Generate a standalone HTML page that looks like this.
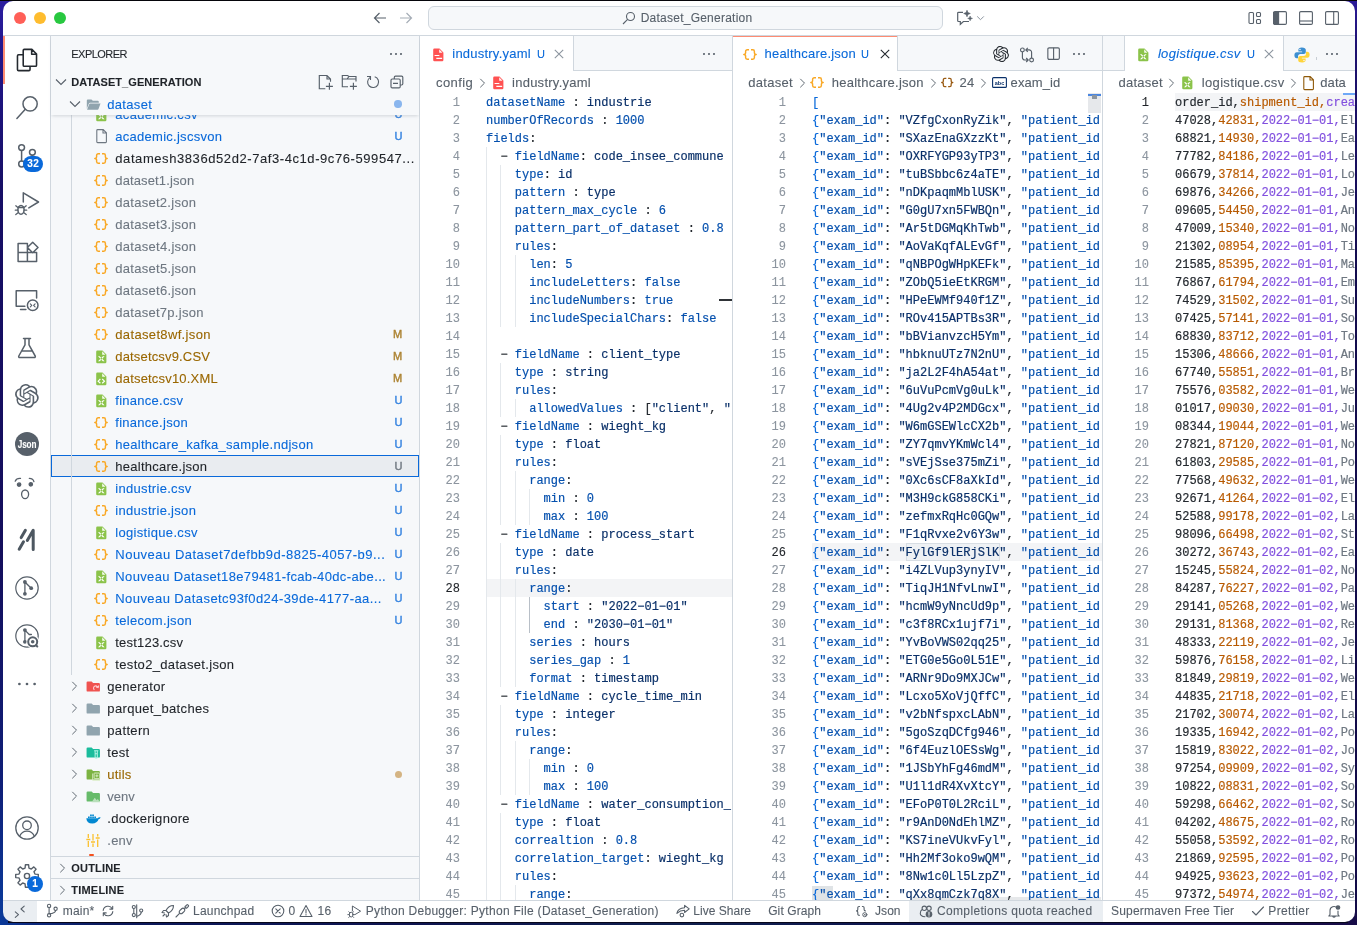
<!DOCTYPE html><html><head><meta charset="utf-8"><title>Dataset_Generation</title><style>
*{box-sizing:border-box;margin:0;padding:0}
html,body{width:1357px;height:925px;overflow:hidden}
body{position:relative;font-family:"Liberation Sans",sans-serif;font-size:13px;color:#1f2328;-webkit-text-stroke:0.1px;
 background:#120e52}
.abs{position:absolute}
#win{position:absolute;left:0;top:0;width:1357px;height:925px;background:#fff;
 clip-path:inset(1px 2px 3px 3px round 10px);will-change:transform}
#topedge{position:absolute;left:0;top:0;width:1357px;height:1px;background:#05050a}
.hl{position:absolute;background:#d0d7de}
.mono{font-family:"Liberation Mono",monospace;font-size:12px;line-height:18px;white-space:pre;-webkit-text-stroke:0.18px}
.ln{position:absolute;text-align:right;color:#8c959f;font-family:"Liberation Mono",monospace;font-size:12px;line-height:18px;white-space:pre}
.ln b{font-weight:normal;color:#1f2328}
.code{position:absolute;overflow:hidden;z-index:2}
.code div{height:18px}
.k{color:#0550ae}.s{color:#0a3069}.p{color:#24292f}.b{color:#0969da}
.o{color:#b85a00}.v{color:#8250df}.g{color:#6e7781}
.row{position:absolute;left:52px;width:367px;height:22px;line-height:22px;font-size:13px;white-space:nowrap}
.row .lbl{position:absolute;top:0}
.row .bd{position:absolute;left:340px;width:12px;text-align:center;font-size:11px;top:0}
.row svg{position:absolute}
.cu{color:#0969da}.cm{color:#9a6700}.cg{color:#6e7781}.cn{color:#1f2328}
.sb{position:absolute;top:901px;height:21px;line-height:21px;font-size:12px;color:#57606a;white-space:nowrap}
.tab{position:absolute;top:36px;height:35px;line-height:35px;font-size:13px;white-space:nowrap}
.bc{position:absolute;top:71px;height:22px;line-height:22px;font-size:13px;color:#57606a;white-space:nowrap}
.guide{position:absolute;width:1px;background:#e4e8ec}
svg{overflow:visible}
</style></head><body>
<div class="abs" style="left:0;top:0;width:14px;height:925px;background:linear-gradient(180deg,#2c1ea0 0%,#21168a 6%,#170f66 20%,#140e5c 60%,#0f1f78 85%,#0b3796 97%,#0a3a9a 100%)"></div>
<div class="abs" style="left:1343px;top:0;width:14px;height:925px;background:linear-gradient(180deg,#2c1b9a 0%,#1d1170 5%,#130c4e 30%,#120b48 100%)"></div>
<div class="abs" style="left:0;top:910px;width:1357px;height:15px;background:linear-gradient(90deg,#0a3a9a 0%,#0c2a80 2%,#0d1a5c 8%,#0e1450 30%,#10204e 50%,#0e1450 70%,#180c48 100%)"></div>
<div class="abs" style="left:8px;top:921px;width:1340px;height:2px;background:#07071c"></div>
<div id="win">
<div class="abs" style="left:0;top:0;width:1357px;height:35px;background:#fff"></div>
<div class="hl" style="left:0;top:35px;width:1357px;height:1px"></div>
<div class="abs" style="left:14px;top:12px;width:12px;height:12px;border-radius:50%;background:#ff5f57"></div>
<div class="abs" style="left:34px;top:12px;width:12px;height:12px;border-radius:50%;background:#febc2e"></div>
<div class="abs" style="left:54px;top:12px;width:12px;height:12px;border-radius:50%;background:#28c840"></div>
<svg class="abs" style="left:373px;top:11px" width="14" height="14" viewBox="0 0 14 14" fill="none" stroke="#57606a" stroke-width="1.2"><path d="M13 7H1.5M6.5 2L1.5 7l5 5"/></svg>
<svg class="abs" style="left:399px;top:11px" width="14" height="14" viewBox="0 0 14 14" fill="none" stroke="#a5adb6" stroke-width="1.2"><path d="M1 7h11.5M7.5 2l5 5-5 5"/></svg>
<div class="abs" style="left:428px;top:6px;width:515px;height:24px;border:1px solid #d0d7de;border-radius:6px;background:#f6f8fa"></div>
<svg class="abs" style="left:622px;top:11px" width="14" height="14" viewBox="0 0 14 14" fill="none" stroke="#57606a" stroke-width="1.1"><circle cx="8.5" cy="5.5" r="4"/><path d="M5.6 8.4L1 13"/></svg>
<div class="abs" style="left:640.7px;top:10px;font-size:12px;line-height:16px;color:#57606a;letter-spacing:0.24px">Dataset_Generation</div>
<svg class="abs" style="left:956px;top:10px" width="30" height="16" viewBox="0 0 30 16" fill="none" stroke="#57606a" stroke-width="1.200"><path d="M7 2.300H2.500a.8.800 0 0 0-.8.800V10.700a.8.800 0 0 0 .8.800H4.300V14.300L7.400 11.500H13"/><path d="M11 0.200l.9 2.400 2.400.9-2.400.9-.9 2.400-.9-2.400-2.400-.9 2.400-.9z" fill="#57606a" stroke="#57606a" stroke-width=".6" stroke-linejoin="round"/><path d="M14.100 6l.65 1.750 1.750.65-1.750.65-.65 1.750-.65-1.750-1.750-.65 1.750-.65z" fill="#57606a" stroke="#57606a" stroke-width=".5" stroke-linejoin="round"/><path d="M21.200 6.400l3.300 3.300 3.300-3.300" stroke="#8c959f" stroke-width="1"/></svg>
<svg class="abs" style="left:1247.7px;top:11px" width="14" height="14" viewBox="0 0 14 14" fill="none" stroke="#57606a" stroke-width="1.1"><rect x="1" y="1.5" width="4.5" height="11" rx="1"/><rect x="8.5" y="1.5" width="4" height="4" rx="1"/><rect x="8.5" y="8.5" width="4" height="4" rx="1"/></svg>
<svg class="abs" style="left:1273px;top:11px" width="14" height="14" viewBox="0 0 14 14" fill="none" stroke="#57606a" stroke-width="1.1"><rect x="0.6" y="0.6" width="12.8" height="12.8" rx="1.2"/><path d="M0.6 1.5h5v11h-5z" fill="#57606a"/></svg>
<svg class="abs" style="left:1299px;top:11px" width="14" height="14" viewBox="0 0 14 14" fill="none" stroke="#57606a" stroke-width="1.1"><rect x="0.6" y="0.6" width="12.8" height="12.8" rx="1.2"/><path d="M0.6 10h12.8"/></svg>
<svg class="abs" style="left:1325px;top:11px" width="14" height="14" viewBox="0 0 14 14" fill="none" stroke="#57606a" stroke-width="1.1"><rect x="0.6" y="0.6" width="12.8" height="12.8" rx="1.2"/><path d="M8.7 0.6v12.8"/></svg>
<div class="abs" style="left:0;top:36px;width:50px;height:864px;background:#fff"></div>
<div class="hl" style="left:50px;top:36px;width:1px;height:864px"></div>
<div class="abs" style="left:3px;top:36px;width:2px;height:48px;background:#fd8c73"></div>
<svg class="abs" style="left:14.0px;top:46.8px" width="26" height="26" viewBox="0 0 24 24" ><g fill="none" stroke="#24292f" stroke-width="1.450" stroke-linejoin="round"><path d="M9.500 2.200h7l4.300 4.300v10.300a1 1 0 0 1-1 1H9.500a1 1 0 0 1-1-1V3.200a1 1 0 0 1 1-1zM16.300 2.400v4.300h4.300"/><path d="M8.500 7.200H4.200a1 1 0 0 0-1 1v12.600a1 1 0 0 0 1 1h9.600a1 1 0 0 0 1-1v-3"/></g></svg>
<svg class="abs" style="left:15.0px;top:95.0px" width="24" height="24" viewBox="0 0 24 24" ><g fill="none" stroke="#57606a" stroke-width="1.500" stroke-linejoin="round" stroke-linecap="round"><circle cx="15.100" cy="8.900" r="7.100"/><path d="M10.300 14.200L1.900 23.500"/></g></svg>
<svg class="abs" style="left:15.0px;top:143.0px" width="24" height="24" viewBox="0 0 24 24" ><g fill="none" stroke="#57606a" stroke-width="1.500" stroke-linejoin="round" stroke-linecap="round"><circle cx="6.600" cy="4.600" r="2.900"/><circle cx="6.600" cy="21" r="2.900"/><circle cx="17.400" cy="9.300" r="2.900"/><path d="M6.600 7.500v10.600M17.400 12.200c0 3.500-5 4.500-8.500 6.300"/></g></svg>
<div class="abs" style="left:23px;top:156px;width:20px;height:16px;border-radius:8px;background:#0969da;color:#fff;font-size:10px;font-weight:bold;line-height:16px;text-align:center;letter-spacing:.4px;text-indent:.4px">32</div>
<svg class="abs" style="left:15.0px;top:191.0px" width="24" height="24" viewBox="0 0 24 24" ><g fill="none" stroke="#57606a" stroke-width="1.500" stroke-linejoin="round" stroke-linecap="round"><path d="M8.300 11V1.800L23.500 11 13.800 16.900"/><ellipse cx="6" cy="18.800" rx="3.100" ry="4.400"/><path d="M3.300 16.500h5.400M3.200 16.800L0.800 14.800M8.800 16.800l2.400-2M2.900 19.200H0.300M9.100 19.200h2.600M3.400 21.500L0.800 23.500M8.600 21.500l2.600 2" stroke-width="1.300"/></g></svg>
<svg class="abs" style="left:15.0px;top:239.0px" width="24" height="24" viewBox="0 0 24 24" ><g fill="none" stroke="#57606a" stroke-width="1.500" stroke-linejoin="round" stroke-linecap="round"><path d="M3.100 4.400H12.400V22.600M3.100 4.400V22.600H21.600V13.500H3.100M17.700 3.200L23 8.500 17.700 13.800 12.400 8.500z"/></g></svg>
<svg class="abs" style="left:15.0px;top:287.0px" width="24" height="24" viewBox="0 0 24 24" ><g fill="none" stroke="#57606a" stroke-width="1.500" stroke-linejoin="round" stroke-linecap="round"><path d="M9.900 19.300H1.200V3.700H21.600V11M5.500 22.500H10.900"/><circle cx="17.700" cy="18.300" r="5.300"/><path d="M15.300 16.800l1.500 1.500-1.500 1.500M20.100 16.800l-1.500 1.500 1.500 1.500" stroke-width="1.100"/></g></svg>
<svg class="abs" style="left:15.0px;top:335.8px" width="24" height="24" viewBox="0 0 24 24" ><g fill="none" stroke="#57606a" stroke-width="1.500" stroke-linejoin="round" stroke-linecap="round"><path d="M8.500 2.500h7M10 2.500v6.300L3.800 20a1 1 0 0 0 .9 1.500h14.600a1 1 0 0 0 .9-1.500L14 8.800V2.500M6.500 15h11"/></g></svg>
<svg class="abs" style="left:14.8px;top:383.7px" width="23.8" height="23.8" viewBox="0 0 24 24" ><path fill="#57606a" d="M22.2819 9.8211a5.9847 5.9847 0 0 0-.5157-4.9108 6.0462 6.0462 0 0 0-6.5098-2.9A6.0651 6.0651 0 0 0 4.9807 4.1818a5.9847 5.9847 0 0 0-3.9977 2.9 6.0462 6.0462 0 0 0 .7427 7.0966 5.98 5.98 0 0 0 .511 4.9107 6.051 6.051 0 0 0 6.5146 2.9001A5.9847 5.9847 0 0 0 13.2599 24a6.0557 6.0557 0 0 0 5.7718-4.2058 5.9894 5.9894 0 0 0 3.9977-2.9001 6.0557 6.0557 0 0 0-.7475-7.0729zm-9.022 12.6081a4.4755 4.4755 0 0 1-2.8764-1.0408l.1419-.0804 4.7783-2.7582a.7948.7948 0 0 0 .3927-.6813v-6.7369l2.02 1.1686a.071.071 0 0 1 .038.052v5.5826a4.504 4.504 0 0 1-4.4945 4.4944zm-9.6607-4.1254a4.4708 4.4708 0 0 1-.5346-3.0137l.142.0852 4.783 2.7582a.7712.7712 0 0 0 .7806 0l5.8428-3.3685v2.3324a.0804.0804 0 0 1-.0332.0615L9.74 19.9502a4.4992 4.4992 0 0 1-6.1408-1.6464zM2.3408 7.8956a4.485 4.485 0 0 1 2.3655-1.9728V11.6a.7664.7664 0 0 0 .3879.6765l5.8144 3.3543-2.0201 1.1685a.0757.0757 0 0 1-.071 0l-4.8303-2.7865A4.504 4.504 0 0 1 2.3408 7.8956zm16.5963 3.8558L13.1038 8.364 15.1192 7.2a.0757.0757 0 0 1 .071 0l4.8303 2.7913a4.4944 4.4944 0 0 1-.6765 8.1042v-5.6772a.79.79 0 0 0-.407-.667zm2.0107-3.0231l-.142-.0852-4.7735-2.7818a.7759.7759 0 0 0-.7854 0L9.409 9.2297V6.8974a.0662.0662 0 0 1 .0284-.0615l4.8303-2.7866a4.4992 4.4992 0 0 1 6.6802 4.66zM8.3065 12.863l-2.02-1.1638a.0804.0804 0 0 1-.038-.0567V6.0742a4.4992 4.4992 0 0 1 7.3757-3.4537l-.142.0805L8.704 5.459a.7948.7948 0 0 0-.3927.6813zm1.0976-2.3654l2.602-1.4998 2.6069 1.4998v2.9994l-2.5974 1.4997-2.6067-1.4997Z"/></svg>
<div class="abs" style="left:15.100px;top:431.800px;width:24px;height:24px;border-radius:50%;background:#57606a;color:#fff;font-size:10.500px;font-weight:bold;line-height:24px;text-align:center;letter-spacing:-0.100px"><span style="display:inline-block;transform:scaleX(.78)">Json</span></div>
<svg class="abs" style="left:13.0px;top:477.0px" width="24" height="24" viewBox="0 0 24 24" ><g fill="none" stroke="#57606a" stroke-width="1.300" stroke-linecap="round"><path d="M2.200 4.200C3 2.300 5.300 1.200 7.500 1.400M16.300 1.300C18.500 1.300 20.500 2.700 20.900 4.700"/><circle cx="6.100" cy="7.600" r="1.700" fill="#57606a"/><circle cx="17.800" cy="7.300" r="1.700" fill="#57606a"/><ellipse cx="12.100" cy="17.300" rx="3.500" ry="4.300"/></g></svg>
<svg class="abs" style="left:15.0px;top:527.0px" width="24" height="24" viewBox="0 0 24 24" ><g fill="none" stroke="#4d5761" stroke-width="3" stroke-linecap="round" stroke-linejoin="round"><path d="M10.400 3.300L6.200 10.600M8.500 14.800L4.200 22.300M18.200 22.600V3.200L12.300 13.500"/></g></svg>
<svg class="abs" style="left:15.0px;top:575.9px" width="24" height="24" viewBox="0 0 24 24" ><g fill="none" stroke="#57606a" stroke-width="1.500" stroke-linejoin="round" stroke-linecap="round"><circle cx="12" cy="12" r="11.200" stroke-width="1.200"/><path d="M9.900 6v11.800M9.900 6l6.300 6.200" stroke-width="1.300"/><circle cx="9.900" cy="6" r="1.900" fill="#57606a" stroke="none"/><circle cx="9.900" cy="17.800" r="1.900" fill="#57606a" stroke="none"/><circle cx="16.200" cy="12.200" r="1.900" fill="#57606a" stroke="none"/></g></svg>
<svg class="abs" style="left:15.0px;top:623.8px" width="24" height="24" viewBox="0 0 24 24" ><g fill="none" stroke="#57606a" stroke-width="1.500" stroke-linejoin="round" stroke-linecap="round"><circle cx="12" cy="12" r="11.200" stroke-width="1.200"/><path d="M9.900 6.100v11.700M9.900 6.100l4.300 4.400h2.200" stroke-width="1.300"/><circle cx="9.900" cy="6.100" r="1.900" fill="#57606a" stroke="none"/><circle cx="9.900" cy="17.800" r="1.900" fill="#57606a" stroke="none"/><circle cx="17.900" cy="17.900" r="6.400" fill="#fff" stroke="none"/><circle cx="17.700" cy="17.800" r="4.500" stroke-width="2"/><circle cx="17.700" cy="17.800" r="1.800" fill="#57606a" stroke="none"/><path d="M21 21.200l1.300 1.300" stroke-width="2"/></g></svg>
<svg class="abs" style="left:17.0px;top:682.0px" width="20" height="4" viewBox="0 0 20 4" ><circle cx="2.400" cy="2" r="1.350" fill="#57606a"/><circle cx="10" cy="2" r="1.350" fill="#57606a"/><circle cx="17.600" cy="2" r="1.350" fill="#57606a"/></svg>
<svg class="abs" style="left:15.0px;top:816.0px" width="24" height="24" viewBox="0 0 24 24" ><g fill="none" stroke="#57606a" stroke-width="1.500" stroke-linejoin="round" stroke-linecap="round"><circle cx="12" cy="12" r="11.200" stroke-width="1.300"/><circle cx="12" cy="9.300" r="4.300" stroke-width="1.300"/><path d="M4.600 20.300c1.300-3.300 4-5.200 7.400-5.200s6.100 1.900 7.400 5.200" stroke-width="1.300"/></g></svg>
<svg class="abs" style="left:15.0px;top:864.0px" width="24" height="24" viewBox="0 0 24 24" ><g fill="none" stroke="#57606a" stroke-width="1.500" stroke-linejoin="round" stroke-linecap="round"><path d="M19.97 10.09 L23.29 10.39 L23.29 13.61 L19.97 13.91 L18.99 16.28 L21.12 18.84 L18.84 21.12 L16.28 18.99 L13.91 19.97 L13.61 23.29 L10.39 23.29 L10.09 19.97 L7.72 18.99 L5.16 21.12 L2.88 18.84 L5.01 16.28 L4.03 13.91 L0.71 13.61 L0.71 10.39 L4.03 10.09 L5.01 7.72 L2.88 5.16 L5.16 2.88 L7.72 5.01 L10.09 4.03 L10.39 0.71 L13.61 0.71 L13.91 4.03 L16.28 5.01 L18.84 2.88 L21.12 5.16 L18.99 7.72 Z" stroke-width="1.400"/><circle cx="12" cy="12" r="2.600" stroke-width="1.400"/></g></svg>
<div class="abs" style="left:27px;top:876px;width:16px;height:16px;border-radius:8px;background:#0969da;color:#fff;font-size:10px;font-weight:bold;line-height:16px;text-align:center">1</div>
<div class="abs" style="left:51px;top:36px;width:368px;height:864px;background:#f6f8fa"></div>
<div class="hl" style="left:419px;top:36px;width:1px;height:864px"></div>
<div class="abs" style="left:51px;top:455px;width:368px;height:22px;background:#e9ecf0;border:1px solid #0969da"></div>
<div class="abs" style="left:71px;top:115px;width:1px;height:560px;background:#d0d7de"></div>
<svg class="abs" style="left:95.7px;top:107.5px" width="10.6" height="13.8" viewBox="0 0 16 20" ><path d="M2.2 0.3h7.6l5.9 5.9v11.6a1.9 1.9 0 0 1-1.9 1.9H2.2a1.9 1.9 0 0 1-1.9-1.9V2.2A1.9 1.9 0 0 1 2.2 0.3z" fill="#8bc34a"/><path d="M9.3 1.6v5h5z" fill="#fff" opacity=".92"/><path d="M3 9.2l2.6 0 2.4 2.4 2.4-2.4 2.6 0-3.7 3.7 3.7 3.7-2.6 0-2.4-2.4-2.4 2.4-2.6 0 3.7-3.7z" fill="#fff"/><rect x="6.9" y="11.7" width="2.2" height="2.2" fill="#8bc34a"/></svg>
<div class="abs" style="left:115.3px;top:105.0px;height:20px;line-height:20px;font-size:13px;color:#0969da;white-space:nowrap;letter-spacing:0.312px;">academic.csv</div>
<div class="abs" style="left:390.500px;top:104px;width:16px;text-align:center;height:20px;line-height:20px;font-size:11px;-webkit-text-stroke:.45px;opacity:.8;color:#0969da">U</div>
<svg class="abs" style="left:95.5px;top:129.0px" width="11" height="14" viewBox="0 0 11 14" ><path d="M1.6 0.6h5.6l3.2 3.2v9a.8.8 0 0 1-.8.8h-8a.8.8 0 0 1-.8-.8V1.4a.8.8 0 0 1 .8-.8zM7 0.8v3.2h3.2" fill="none" stroke="#6e7781" stroke-width="1.1"/></svg>
<div class="abs" style="left:115.3px;top:127.0px;height:20px;line-height:20px;font-size:13px;color:#0969da;white-space:nowrap;letter-spacing:0.269px;">academic.jscsvon</div>
<div class="abs" style="left:390.500px;top:126px;width:16px;text-align:center;height:20px;line-height:20px;font-size:11px;-webkit-text-stroke:.45px;opacity:.8;color:#0969da">U</div>
<svg class="abs" style="left:94.0px;top:152.5px" width="14" height="11" viewBox="0 0 14 11" ><path d="M6 0.800H4.200a1.600 1.600 0 0 0-1.600 1.600V4c0 .9-.7 1.500-1.800 1.500 1.100 0 1.800.6 1.800 1.500v1.600a1.600 1.600 0 0 0 1.600 1.600H6M8 0.800h1.800a1.600 1.600 0 0 1 1.600 1.600V4c0 .9.7 1.500 1.800 1.500-1.100 0-1.800.6-1.800 1.500v1.600a1.600 1.600 0 0 1-1.600 1.600H8" fill="none" stroke="#f9a825" stroke-width="1.450" stroke-linejoin="round"/></svg>
<div class="abs" style="left:115.3px;top:149.0px;height:20px;line-height:20px;font-size:13px;color:#1f2328;white-space:nowrap;letter-spacing:0.576px;">datamesh3836d52d2-7af3-4c1d-9c76-599547...</div>
<svg class="abs" style="left:94.0px;top:174.5px" width="14" height="11" viewBox="0 0 14 11" ><path d="M6 0.800H4.200a1.600 1.600 0 0 0-1.600 1.600V4c0 .9-.7 1.500-1.800 1.500 1.100 0 1.800.6 1.800 1.500v1.600a1.600 1.600 0 0 0 1.600 1.600H6M8 0.800h1.800a1.600 1.600 0 0 1 1.600 1.600V4c0 .9.7 1.500 1.800 1.500-1.100 0-1.800.6-1.800 1.500v1.600a1.600 1.600 0 0 1-1.600 1.600H8" fill="none" stroke="#f9a825" stroke-width="1.450" stroke-linejoin="round"/></svg>
<div class="abs" style="left:115.3px;top:171.0px;height:20px;line-height:20px;font-size:13px;color:#6e7781;white-space:nowrap;letter-spacing:0.128px;">dataset1.json</div>
<svg class="abs" style="left:94.0px;top:196.5px" width="14" height="11" viewBox="0 0 14 11" ><path d="M6 0.800H4.200a1.600 1.600 0 0 0-1.600 1.600V4c0 .9-.7 1.500-1.800 1.500 1.100 0 1.800.6 1.800 1.500v1.600a1.600 1.600 0 0 0 1.600 1.600H6M8 0.800h1.800a1.600 1.600 0 0 1 1.600 1.600V4c0 .9.7 1.500 1.800 1.500-1.100 0-1.800.6-1.800 1.500v1.600a1.600 1.600 0 0 1-1.600 1.600H8" fill="none" stroke="#f9a825" stroke-width="1.450" stroke-linejoin="round"/></svg>
<div class="abs" style="left:115.3px;top:193.0px;height:20px;line-height:20px;font-size:13px;color:#6e7781;white-space:nowrap;letter-spacing:0.274px;">dataset2.json</div>
<svg class="abs" style="left:94.0px;top:218.5px" width="14" height="11" viewBox="0 0 14 11" ><path d="M6 0.800H4.200a1.600 1.600 0 0 0-1.600 1.600V4c0 .9-.7 1.500-1.800 1.500 1.100 0 1.800.6 1.800 1.500v1.600a1.600 1.600 0 0 0 1.600 1.600H6M8 0.800h1.800a1.600 1.600 0 0 1 1.600 1.600V4c0 .9.7 1.500 1.800 1.500-1.100 0-1.800.6-1.800 1.500v1.600a1.600 1.600 0 0 1-1.600 1.600H8" fill="none" stroke="#f9a825" stroke-width="1.450" stroke-linejoin="round"/></svg>
<div class="abs" style="left:115.3px;top:215.0px;height:20px;line-height:20px;font-size:13px;color:#6e7781;white-space:nowrap;letter-spacing:0.289px;">dataset3.json</div>
<svg class="abs" style="left:94.0px;top:240.5px" width="14" height="11" viewBox="0 0 14 11" ><path d="M6 0.800H4.200a1.600 1.600 0 0 0-1.600 1.600V4c0 .9-.7 1.500-1.800 1.500 1.100 0 1.800.6 1.800 1.500v1.600a1.600 1.600 0 0 0 1.600 1.600H6M8 0.800h1.800a1.600 1.600 0 0 1 1.600 1.600V4c0 .9.7 1.500 1.800 1.500-1.100 0-1.800.6-1.800 1.500v1.600a1.600 1.600 0 0 1-1.600 1.600H8" fill="none" stroke="#f9a825" stroke-width="1.450" stroke-linejoin="round"/></svg>
<div class="abs" style="left:115.3px;top:237.0px;height:20px;line-height:20px;font-size:13px;color:#6e7781;white-space:nowrap;letter-spacing:0.289px;">dataset4.json</div>
<svg class="abs" style="left:94.0px;top:262.5px" width="14" height="11" viewBox="0 0 14 11" ><path d="M6 0.800H4.200a1.600 1.600 0 0 0-1.600 1.600V4c0 .9-.7 1.500-1.800 1.500 1.100 0 1.800.6 1.800 1.500v1.600a1.600 1.600 0 0 0 1.600 1.600H6M8 0.800h1.800a1.600 1.600 0 0 1 1.600 1.600V4c0 .9.7 1.500 1.800 1.500-1.100 0-1.800.6-1.800 1.500v1.600a1.600 1.600 0 0 1-1.600 1.600H8" fill="none" stroke="#f9a825" stroke-width="1.450" stroke-linejoin="round"/></svg>
<div class="abs" style="left:115.3px;top:259.0px;height:20px;line-height:20px;font-size:13px;color:#6e7781;white-space:nowrap;letter-spacing:0.289px;">dataset5.json</div>
<svg class="abs" style="left:94.0px;top:284.5px" width="14" height="11" viewBox="0 0 14 11" ><path d="M6 0.800H4.200a1.600 1.600 0 0 0-1.600 1.600V4c0 .9-.7 1.500-1.800 1.500 1.100 0 1.800.6 1.800 1.500v1.600a1.600 1.600 0 0 0 1.600 1.600H6M8 0.800h1.800a1.600 1.600 0 0 1 1.600 1.600V4c0 .9.7 1.500 1.800 1.500-1.100 0-1.800.6-1.800 1.500v1.600a1.600 1.600 0 0 1-1.600 1.600H8" fill="none" stroke="#f9a825" stroke-width="1.450" stroke-linejoin="round"/></svg>
<div class="abs" style="left:115.3px;top:281.0px;height:20px;line-height:20px;font-size:13px;color:#6e7781;white-space:nowrap;letter-spacing:0.289px;">dataset6.json</div>
<svg class="abs" style="left:94.0px;top:306.5px" width="14" height="11" viewBox="0 0 14 11" ><path d="M6 0.800H4.200a1.600 1.600 0 0 0-1.600 1.600V4c0 .9-.7 1.500-1.800 1.500 1.100 0 1.800.6 1.800 1.500v1.600a1.600 1.600 0 0 0 1.600 1.600H6M8 0.800h1.800a1.600 1.600 0 0 1 1.600 1.600V4c0 .9.7 1.500 1.800 1.500-1.100 0-1.800.6-1.800 1.500v1.600a1.600 1.600 0 0 1-1.600 1.600H8" fill="none" stroke="#f9a825" stroke-width="1.450" stroke-linejoin="round"/></svg>
<div class="abs" style="left:115.3px;top:303.0px;height:20px;line-height:20px;font-size:13px;color:#6e7781;white-space:nowrap;letter-spacing:0.274px;">dataset7p.json</div>
<svg class="abs" style="left:94.0px;top:328.5px" width="14" height="11" viewBox="0 0 14 11" ><path d="M6 0.800H4.200a1.600 1.600 0 0 0-1.600 1.600V4c0 .9-.7 1.500-1.800 1.500 1.100 0 1.800.6 1.800 1.500v1.600a1.600 1.600 0 0 0 1.600 1.600H6M8 0.800h1.800a1.600 1.600 0 0 1 1.600 1.600V4c0 .9.7 1.500 1.800 1.500-1.100 0-1.800.6-1.800 1.500v1.600a1.600 1.600 0 0 1-1.600 1.600H8" fill="none" stroke="#f9a825" stroke-width="1.450" stroke-linejoin="round"/></svg>
<div class="abs" style="left:115.3px;top:325.0px;height:20px;line-height:20px;font-size:13px;color:#9a6700;white-space:nowrap;letter-spacing:0.344px;">dataset8wf.json</div>
<div class="abs" style="left:389.700px;top:324px;width:16px;text-align:center;height:20px;line-height:20px;font-size:11px;-webkit-text-stroke:.45px;opacity:.8;color:#9a6700">M</div>
<svg class="abs" style="left:95.7px;top:349.5px" width="10.6" height="13.8" viewBox="0 0 16 20" ><path d="M2.2 0.3h7.6l5.9 5.9v11.6a1.9 1.9 0 0 1-1.9 1.9H2.2a1.9 1.9 0 0 1-1.9-1.9V2.2A1.9 1.9 0 0 1 2.2 0.3z" fill="#8bc34a"/><path d="M9.3 1.6v5h5z" fill="#fff" opacity=".92"/><path d="M3 9.2l2.6 0 2.4 2.4 2.4-2.4 2.6 0-3.7 3.7 3.7 3.7-2.6 0-2.4-2.4-2.4 2.4-2.6 0 3.7-3.7z" fill="#fff"/><rect x="6.9" y="11.7" width="2.2" height="2.2" fill="#8bc34a"/></svg>
<div class="abs" style="left:115.3px;top:347.0px;height:20px;line-height:20px;font-size:13px;color:#9a6700;white-space:nowrap;letter-spacing:0.165px;">datsetcsv9.CSV</div>
<div class="abs" style="left:389.700px;top:346px;width:16px;text-align:center;height:20px;line-height:20px;font-size:11px;-webkit-text-stroke:.45px;opacity:.8;color:#9a6700">M</div>
<svg class="abs" style="left:95.7px;top:371.5px" width="10.6" height="13.8" viewBox="0 0 16 20" ><path d="M2.2 0.3h7.6l5.9 5.9v11.6a1.9 1.9 0 0 1-1.9 1.9H2.2a1.9 1.9 0 0 1-1.9-1.9V2.2A1.9 1.9 0 0 1 2.2 0.3z" fill="#8bc34a"/><path d="M9.3 1.6v5h5z" fill="#fff" opacity=".92"/><path d="M6.6 10.2L3.2 13.4l3.4 3.2M9.4 10.2l3.4 3.2-3.4 3.2" fill="none" stroke="#fff" stroke-width="1.7"/></svg>
<div class="abs" style="left:115.3px;top:369.0px;height:20px;line-height:20px;font-size:13px;color:#9a6700;white-space:nowrap;letter-spacing:0.192px;">datsetcsv10.XML</div>
<div class="abs" style="left:389.700px;top:368px;width:16px;text-align:center;height:20px;line-height:20px;font-size:11px;-webkit-text-stroke:.45px;opacity:.8;color:#9a6700">M</div>
<svg class="abs" style="left:95.7px;top:393.5px" width="10.6" height="13.8" viewBox="0 0 16 20" ><path d="M2.2 0.3h7.6l5.9 5.9v11.6a1.9 1.9 0 0 1-1.9 1.9H2.2a1.9 1.9 0 0 1-1.9-1.9V2.2A1.9 1.9 0 0 1 2.2 0.3z" fill="#8bc34a"/><path d="M9.3 1.6v5h5z" fill="#fff" opacity=".92"/><path d="M3 9.2l2.6 0 2.4 2.4 2.4-2.4 2.6 0-3.7 3.7 3.7 3.7-2.6 0-2.4-2.4-2.4 2.4-2.6 0 3.7-3.7z" fill="#fff"/><rect x="6.9" y="11.7" width="2.2" height="2.2" fill="#8bc34a"/></svg>
<div class="abs" style="left:115.3px;top:391.0px;height:20px;line-height:20px;font-size:13px;color:#0969da;white-space:nowrap;letter-spacing:0.26px;">finance.csv</div>
<div class="abs" style="left:390.500px;top:390px;width:16px;text-align:center;height:20px;line-height:20px;font-size:11px;-webkit-text-stroke:.45px;opacity:.8;color:#0969da">U</div>
<svg class="abs" style="left:94.0px;top:416.5px" width="14" height="11" viewBox="0 0 14 11" ><path d="M6 0.800H4.200a1.600 1.600 0 0 0-1.600 1.600V4c0 .9-.7 1.500-1.800 1.500 1.100 0 1.800.6 1.800 1.500v1.600a1.600 1.600 0 0 0 1.600 1.600H6M8 0.800h1.800a1.600 1.600 0 0 1 1.600 1.600V4c0 .9.7 1.500 1.800 1.500-1.100 0-1.800.6-1.800 1.500v1.600a1.600 1.600 0 0 1-1.600 1.600H8" fill="none" stroke="#f9a825" stroke-width="1.450" stroke-linejoin="round"/></svg>
<div class="abs" style="left:115.3px;top:413.0px;height:20px;line-height:20px;font-size:13px;color:#0969da;white-space:nowrap;letter-spacing:0.268px;">finance.json</div>
<div class="abs" style="left:390.500px;top:412px;width:16px;text-align:center;height:20px;line-height:20px;font-size:11px;-webkit-text-stroke:.45px;opacity:.8;color:#0969da">U</div>
<svg class="abs" style="left:94.0px;top:438.5px" width="14" height="11" viewBox="0 0 14 11" ><path d="M6 0.800H4.200a1.600 1.600 0 0 0-1.600 1.600V4c0 .9-.7 1.500-1.800 1.500 1.100 0 1.800.6 1.800 1.500v1.600a1.600 1.600 0 0 0 1.600 1.600H6M8 0.800h1.800a1.600 1.600 0 0 1 1.600 1.600V4c0 .9.7 1.500 1.800 1.500-1.100 0-1.800.6-1.800 1.500v1.600a1.600 1.600 0 0 1-1.600 1.600H8" fill="none" stroke="#f9a825" stroke-width="1.450" stroke-linejoin="round"/></svg>
<div class="abs" style="left:115.3px;top:435.0px;height:20px;line-height:20px;font-size:13px;color:#0969da;white-space:nowrap;letter-spacing:0.267px;">healthcare_kafka_sample.ndjson</div>
<div class="abs" style="left:390.500px;top:434px;width:16px;text-align:center;height:20px;line-height:20px;font-size:11px;-webkit-text-stroke:.45px;opacity:.8;color:#0969da">U</div>
<svg class="abs" style="left:94.0px;top:460.5px" width="14" height="11" viewBox="0 0 14 11" ><path d="M6 0.800H4.200a1.600 1.600 0 0 0-1.600 1.600V4c0 .9-.7 1.500-1.800 1.500 1.100 0 1.800.6 1.800 1.500v1.600a1.600 1.600 0 0 0 1.600 1.600H6M8 0.800h1.800a1.600 1.600 0 0 1 1.600 1.600V4c0 .9.7 1.500 1.800 1.500-1.100 0-1.800.6-1.800 1.500v1.600a1.600 1.600 0 0 1-1.600 1.600H8" fill="none" stroke="#f9a825" stroke-width="1.450" stroke-linejoin="round"/></svg>
<div class="abs" style="left:115.3px;top:457.0px;height:20px;line-height:20px;font-size:13px;color:#1f2328;white-space:nowrap;letter-spacing:0.255px;">healthcare.json</div>
<div class="abs" style="left:390.500px;top:456px;width:16px;text-align:center;height:20px;line-height:20px;font-size:11px;-webkit-text-stroke:.45px;opacity:.8;color:#57606a">U</div>
<svg class="abs" style="left:95.7px;top:481.5px" width="10.6" height="13.8" viewBox="0 0 16 20" ><path d="M2.2 0.3h7.6l5.9 5.9v11.6a1.9 1.9 0 0 1-1.9 1.9H2.2a1.9 1.9 0 0 1-1.9-1.9V2.2A1.9 1.9 0 0 1 2.2 0.3z" fill="#8bc34a"/><path d="M9.3 1.6v5h5z" fill="#fff" opacity=".92"/><path d="M3 9.2l2.6 0 2.4 2.4 2.4-2.4 2.6 0-3.7 3.7 3.7 3.7-2.6 0-2.4-2.4-2.4 2.4-2.6 0 3.7-3.7z" fill="#fff"/><rect x="6.9" y="11.7" width="2.2" height="2.2" fill="#8bc34a"/></svg>
<div class="abs" style="left:115.3px;top:479.0px;height:20px;line-height:20px;font-size:13px;color:#0969da;white-space:nowrap;letter-spacing:0.304px;">industrie.csv</div>
<div class="abs" style="left:390.500px;top:478px;width:16px;text-align:center;height:20px;line-height:20px;font-size:11px;-webkit-text-stroke:.45px;opacity:.8;color:#0969da">U</div>
<svg class="abs" style="left:94.0px;top:504.5px" width="14" height="11" viewBox="0 0 14 11" ><path d="M6 0.800H4.200a1.600 1.600 0 0 0-1.600 1.600V4c0 .9-.7 1.500-1.800 1.500 1.100 0 1.800.6 1.800 1.500v1.600a1.600 1.600 0 0 0 1.600 1.600H6M8 0.800h1.800a1.600 1.600 0 0 1 1.600 1.600V4c0 .9.7 1.500 1.800 1.500-1.100 0-1.800.6-1.800 1.500v1.600a1.600 1.600 0 0 1-1.600 1.600H8" fill="none" stroke="#f9a825" stroke-width="1.450" stroke-linejoin="round"/></svg>
<div class="abs" style="left:115.3px;top:501.0px;height:20px;line-height:20px;font-size:13px;color:#0969da;white-space:nowrap;letter-spacing:0.307px;">industrie.json</div>
<div class="abs" style="left:390.500px;top:500px;width:16px;text-align:center;height:20px;line-height:20px;font-size:11px;-webkit-text-stroke:.45px;opacity:.8;color:#0969da">U</div>
<svg class="abs" style="left:95.7px;top:525.5px" width="10.6" height="13.8" viewBox="0 0 16 20" ><path d="M2.2 0.3h7.6l5.9 5.9v11.6a1.9 1.9 0 0 1-1.9 1.9H2.2a1.9 1.9 0 0 1-1.9-1.9V2.2A1.9 1.9 0 0 1 2.2 0.3z" fill="#8bc34a"/><path d="M9.3 1.6v5h5z" fill="#fff" opacity=".92"/><path d="M3 9.2l2.6 0 2.4 2.4 2.4-2.4 2.6 0-3.7 3.7 3.7 3.7-2.6 0-2.4-2.4-2.4 2.4-2.6 0 3.7-3.7z" fill="#fff"/><rect x="6.9" y="11.7" width="2.2" height="2.2" fill="#8bc34a"/></svg>
<div class="abs" style="left:115.3px;top:523.0px;height:20px;line-height:20px;font-size:13px;color:#0969da;white-space:nowrap;letter-spacing:0.318px;">logistique.csv</div>
<div class="abs" style="left:390.500px;top:522px;width:16px;text-align:center;height:20px;line-height:20px;font-size:11px;-webkit-text-stroke:.45px;opacity:.8;color:#0969da">U</div>
<svg class="abs" style="left:94.0px;top:548.5px" width="14" height="11" viewBox="0 0 14 11" ><path d="M6 0.800H4.200a1.600 1.600 0 0 0-1.600 1.600V4c0 .9-.7 1.500-1.800 1.500 1.100 0 1.800.6 1.800 1.500v1.600a1.600 1.600 0 0 0 1.600 1.600H6M8 0.800h1.800a1.600 1.600 0 0 1 1.600 1.600V4c0 .9.7 1.500 1.800 1.500-1.100 0-1.800.6-1.800 1.500v1.600a1.600 1.600 0 0 1-1.600 1.600H8" fill="none" stroke="#f9a825" stroke-width="1.450" stroke-linejoin="round"/></svg>
<div class="abs" style="left:115.3px;top:545.0px;height:20px;line-height:20px;font-size:13px;color:#0969da;white-space:nowrap;letter-spacing:0.492px;">Nouveau Dataset7defbb9d-8825-4057-b9...</div>
<div class="abs" style="left:390.500px;top:544px;width:16px;text-align:center;height:20px;line-height:20px;font-size:11px;-webkit-text-stroke:.45px;opacity:.8;color:#0969da">U</div>
<svg class="abs" style="left:95.7px;top:569.5px" width="10.6" height="13.8" viewBox="0 0 16 20" ><path d="M2.2 0.3h7.6l5.9 5.9v11.6a1.9 1.9 0 0 1-1.9 1.9H2.2a1.9 1.9 0 0 1-1.9-1.9V2.2A1.9 1.9 0 0 1 2.2 0.3z" fill="#8bc34a"/><path d="M9.3 1.6v5h5z" fill="#fff" opacity=".92"/><path d="M3 9.2l2.6 0 2.4 2.4 2.4-2.4 2.6 0-3.7 3.7 3.7 3.7-2.6 0-2.4-2.4-2.4 2.4-2.6 0 3.7-3.7z" fill="#fff"/><rect x="6.9" y="11.7" width="2.2" height="2.2" fill="#8bc34a"/></svg>
<div class="abs" style="left:115.3px;top:567.0px;height:20px;line-height:20px;font-size:13px;color:#0969da;white-space:nowrap;letter-spacing:0.355px;">Nouveau Dataset18e79481-fcab-40dc-abe...</div>
<div class="abs" style="left:390.500px;top:566px;width:16px;text-align:center;height:20px;line-height:20px;font-size:11px;-webkit-text-stroke:.45px;opacity:.8;color:#0969da">U</div>
<svg class="abs" style="left:94.0px;top:592.5px" width="14" height="11" viewBox="0 0 14 11" ><path d="M6 0.800H4.200a1.600 1.600 0 0 0-1.600 1.600V4c0 .9-.7 1.500-1.800 1.500 1.100 0 1.800.6 1.800 1.500v1.600a1.600 1.600 0 0 0 1.600 1.600H6M8 0.800h1.800a1.600 1.600 0 0 1 1.600 1.600V4c0 .9.7 1.500 1.800 1.500-1.100 0-1.800.6-1.800 1.500v1.600a1.600 1.600 0 0 1-1.600 1.600H8" fill="none" stroke="#f9a825" stroke-width="1.450" stroke-linejoin="round"/></svg>
<div class="abs" style="left:115.3px;top:589.0px;height:20px;line-height:20px;font-size:13px;color:#0969da;white-space:nowrap;letter-spacing:0.421px;">Nouveau Datasetc93f0d24-39de-4177-aa...</div>
<div class="abs" style="left:390.500px;top:588px;width:16px;text-align:center;height:20px;line-height:20px;font-size:11px;-webkit-text-stroke:.45px;opacity:.8;color:#0969da">U</div>
<svg class="abs" style="left:94.0px;top:614.5px" width="14" height="11" viewBox="0 0 14 11" ><path d="M6 0.800H4.200a1.600 1.600 0 0 0-1.600 1.600V4c0 .9-.7 1.500-1.800 1.500 1.100 0 1.800.6 1.800 1.500v1.600a1.600 1.600 0 0 0 1.600 1.600H6M8 0.800h1.800a1.600 1.600 0 0 1 1.600 1.600V4c0 .9.7 1.500 1.800 1.500-1.100 0-1.800.6-1.800 1.500v1.600a1.600 1.600 0 0 1-1.600 1.600H8" fill="none" stroke="#f9a825" stroke-width="1.450" stroke-linejoin="round"/></svg>
<div class="abs" style="left:115.3px;top:611.0px;height:20px;line-height:20px;font-size:13px;color:#0969da;white-space:nowrap;letter-spacing:0.31px;">telecom.json</div>
<div class="abs" style="left:390.500px;top:610px;width:16px;text-align:center;height:20px;line-height:20px;font-size:11px;-webkit-text-stroke:.45px;opacity:.8;color:#0969da">U</div>
<svg class="abs" style="left:95.7px;top:635.5px" width="10.6" height="13.8" viewBox="0 0 16 20" ><path d="M2.2 0.3h7.6l5.9 5.9v11.6a1.9 1.9 0 0 1-1.9 1.9H2.2a1.9 1.9 0 0 1-1.9-1.9V2.2A1.9 1.9 0 0 1 2.2 0.3z" fill="#8bc34a"/><path d="M9.3 1.6v5h5z" fill="#fff" opacity=".92"/><path d="M3 9.2l2.6 0 2.4 2.4 2.4-2.4 2.6 0-3.7 3.7 3.7 3.7-2.6 0-2.4-2.4-2.4 2.4-2.6 0 3.7-3.7z" fill="#fff"/><rect x="6.9" y="11.7" width="2.2" height="2.2" fill="#8bc34a"/></svg>
<div class="abs" style="left:115.3px;top:633.0px;height:20px;line-height:20px;font-size:13px;color:#1f2328;white-space:nowrap;letter-spacing:0.195px;">test123.csv</div>
<svg class="abs" style="left:94.0px;top:658.5px" width="14" height="11" viewBox="0 0 14 11" ><path d="M6 0.800H4.200a1.600 1.600 0 0 0-1.600 1.600V4c0 .9-.7 1.500-1.800 1.500 1.100 0 1.800.6 1.800 1.500v1.600a1.600 1.600 0 0 0 1.600 1.600H6M8 0.800h1.800a1.600 1.600 0 0 1 1.600 1.600V4c0 .9.7 1.500 1.800 1.500-1.100 0-1.800.6-1.800 1.500v1.600a1.600 1.600 0 0 1-1.600 1.600H8" fill="none" stroke="#f9a825" stroke-width="1.450" stroke-linejoin="round"/></svg>
<div class="abs" style="left:115.3px;top:655.0px;height:20px;line-height:20px;font-size:13px;color:#1f2328;white-space:nowrap;letter-spacing:0.334px;">testo2_dataset.json</div>
<svg class="abs" style="left:71.0px;top:680.9px" width="6.8" height="10.2" viewBox="0 0 8 12" ><path d="M1.5 1l5 5-5 5" fill="none" stroke="#57606a" stroke-width="1.1"/></svg>
<svg class="abs" style="left:85.8px;top:680.5px" width="14.5" height="11" viewBox="0 0 16 13" ><path d="M1.5 0.5h4.6l1.7 1.8h6.7a1.4 1.4 0 0 1 1.4 1.4v7.4a1.4 1.4 0 0 1-1.4 1.4H1.5A1.4 1.4 0 0 1 .1 11.100V1.9A1.4 1.4 0 0 1 1.5.5z" fill="#ef5350"/><path d="M9.300 10.500a2.700 2.700 0 1 1 4.300-2.900M14.500 5.300l-.7 2.500-2.400-.8" fill="none" stroke="#ffcdd2" stroke-width="1.300"/></svg>
<div class="abs" style="left:107.3px;top:677.0px;height:20px;line-height:20px;font-size:13px;color:#1f2328;white-space:nowrap;letter-spacing:0.261px;">generator</div>
<svg class="abs" style="left:71.0px;top:702.9px" width="6.8" height="10.2" viewBox="0 0 8 12" ><path d="M1.5 1l5 5-5 5" fill="none" stroke="#57606a" stroke-width="1.1"/></svg>
<svg class="abs" style="left:85.8px;top:702.5px" width="14.5" height="11" viewBox="0 0 16 13" ><path d="M1.5 0.5h4.6l1.7 1.8h6.7a1.4 1.4 0 0 1 1.4 1.4v7.4a1.4 1.4 0 0 1-1.4 1.4H1.5A1.4 1.4 0 0 1 .1 11.100V1.9A1.4 1.4 0 0 1 1.5.5z" fill="#90a4ae"/></svg>
<div class="abs" style="left:107.3px;top:699.0px;height:20px;line-height:20px;font-size:13px;color:#1f2328;white-space:nowrap;letter-spacing:0.349px;">parquet_batches</div>
<svg class="abs" style="left:71.0px;top:724.9px" width="6.8" height="10.2" viewBox="0 0 8 12" ><path d="M1.5 1l5 5-5 5" fill="none" stroke="#57606a" stroke-width="1.1"/></svg>
<svg class="abs" style="left:85.8px;top:724.5px" width="14.5" height="11" viewBox="0 0 16 13" ><path d="M1.5 0.5h4.6l1.7 1.8h6.7a1.4 1.4 0 0 1 1.4 1.4v7.4a1.4 1.4 0 0 1-1.4 1.4H1.5A1.4 1.4 0 0 1 .1 11.100V1.9A1.4 1.4 0 0 1 1.5.5z" fill="#90a4ae"/></svg>
<div class="abs" style="left:107.3px;top:721.0px;height:20px;line-height:20px;font-size:13px;color:#1f2328;white-space:nowrap;letter-spacing:0.346px;">pattern</div>
<svg class="abs" style="left:71.0px;top:746.9px" width="6.8" height="10.2" viewBox="0 0 8 12" ><path d="M1.5 1l5 5-5 5" fill="none" stroke="#57606a" stroke-width="1.1"/></svg>
<svg class="abs" style="left:85.8px;top:746.5px" width="14.5" height="11" viewBox="0 0 16 13" ><path d="M1.5 0.5h4.6l1.7 1.8h6.7a1.4 1.4 0 0 1 1.4 1.4v7.4a1.4 1.4 0 0 1-1.4 1.4H1.5A1.4 1.4 0 0 1 .1 11.100V1.9A1.4 1.4 0 0 1 1.5.5z" fill="#1abc9c"/><path d="M9 4.300h5M10.200 4.300v7.700a1.300 1.300 0 0 0 2.600 0V4.300M10.200 8h2.600" fill="none" stroke="#b2f5e6" stroke-width="1.200"/></svg>
<div class="abs" style="left:107.3px;top:743.0px;height:20px;line-height:20px;font-size:13px;color:#1f2328;white-space:nowrap;letter-spacing:0.311px;">test</div>
<svg class="abs" style="left:71.0px;top:768.9px" width="6.8" height="10.2" viewBox="0 0 8 12" ><path d="M1.5 1l5 5-5 5" fill="none" stroke="#57606a" stroke-width="1.1"/></svg>
<svg class="abs" style="left:85.8px;top:768.5px" width="14.5" height="11" viewBox="0 0 16 13" ><path d="M1.5 0.5h4.6l1.7 1.8h6.7a1.4 1.4 0 0 1 1.4 1.4v7.4a1.4 1.4 0 0 1-1.4 1.4H1.5A1.4 1.4 0 0 1 .1 11.100V1.9A1.4 1.4 0 0 1 1.5.5z" fill="#7cb342"/><path d="M7.300 5.300v8.200h8.700" fill="none" stroke="#dcedc8" stroke-width="1"/><rect x="9" y="4.800" width="6.600" height="6.600" rx=".6" fill="none" stroke="#dcedc8" stroke-width="1.100"/><path d="M12.300 6.300v3.600M10.500 8.100h3.600" stroke="#dcedc8" stroke-width="1.100"/></svg>
<div class="abs" style="left:107.3px;top:765.0px;height:20px;line-height:20px;font-size:13px;color:#9a6700;white-space:nowrap;letter-spacing:0.236px;">utils</div>
<svg class="abs" style="left:71.0px;top:790.9px" width="6.8" height="10.2" viewBox="0 0 8 12" ><path d="M1.5 1l5 5-5 5" fill="none" stroke="#57606a" stroke-width="1.1"/></svg>
<svg class="abs" style="left:85.8px;top:790.5px" width="14.5" height="11" viewBox="0 0 16 13" ><path d="M1.5 0.5h4.6l1.7 1.8h6.7a1.4 1.4 0 0 1 1.4 1.4v7.4a1.4 1.4 0 0 1-1.4 1.4H1.5A1.4 1.4 0 0 1 .1 11.100V1.9A1.4 1.4 0 0 1 1.5.5z" fill="#66bb6a"/><path d="M6 13.300l3.800-5.300 2.300 3 1.300-1.600 2.600 3.900z" fill="#b9dfbb"/></svg>
<div class="abs" style="left:107.3px;top:787.0px;height:20px;line-height:20px;font-size:13px;color:#6e7781;white-space:nowrap;letter-spacing:-0.015px;">venv</div>
<div class="abs" style="left:394.500px;top:770.500px;width:7px;height:7px;border-radius:50%;background:#d4b483"></div>
<svg class="abs" style="left:85.5px;top:812.5px" width="15" height="11" viewBox="0 0 15 11" ><path d="M0.300 5.300h11.400c.6-.9 1.600-1.200 2.900-.9-.3.900-.9 1.500-1.900 1.700C11.700 9 9.600 10.600 6.300 10.600 2.600 10.600.500 8.700.3 5.300z" fill="#0288d1"/><path d="M2 3.400h1.700v1.500H2zM4.100 3.400h1.700v1.500H4.100zM6.200 3.400h1.700v1.500H6.200zM4.100 1.500h1.700V3H4.100zM6.200 1.500h1.700V3H6.200zM8.300 3.400H10v1.500H8.300z" fill="#0288d1"/></svg>
<div class="abs" style="left:107.3px;top:809.0px;height:20px;line-height:20px;font-size:13px;color:#1f2328;white-space:nowrap;letter-spacing:0.287px;">.dockerignore</div>
<svg class="abs" style="left:86.0px;top:833.5px" width="14" height="13" viewBox="0 0 14 13" ><g stroke="#fbc02d" stroke-width="1.300" fill="none"><path d="M2.300 0v4M2.300 7v6M7 0v6.500M7 9.500V13M11.700 0v2.500M11.700 5.500V13M0.300 5.500h4M5 8h4M9.700 4h4"/></g></svg>
<div class="abs" style="left:107.3px;top:831.0px;height:20px;line-height:20px;font-size:13px;color:#6e7781;white-space:nowrap;letter-spacing:0.232px;">.env</div>
<div class="abs" style="left:89px;top:854px;width:5px;height:2px;border-radius:1px;background:#f4511e"></div>
<div class="abs" style="left:51px;top:856px;width:368px;height:44px;background:#f6f8fa"></div>
<div class="hl" style="left:51px;top:856px;width:368px;height:1px"></div>
<div class="hl" style="left:51px;top:878px;width:368px;height:1px"></div>
<svg class="abs" style="left:58.6px;top:862.9px" width="6.8" height="10.2" viewBox="0 0 8 12" ><path d="M1.5 1l5 5-5 5" fill="none" stroke="#57606a" stroke-width="1.1"/></svg>
<div class="abs" style="left:71.3px;top:858.0px;height:20px;line-height:20px;font-size:11px;color:#1f2328;white-space:nowrap;letter-spacing:0.189px;font-weight:bold;">OUTLINE</div>
<svg class="abs" style="left:58.6px;top:884.9px" width="6.8" height="10.2" viewBox="0 0 8 12" ><path d="M1.5 1l5 5-5 5" fill="none" stroke="#57606a" stroke-width="1.1"/></svg>
<div class="abs" style="left:71.3px;top:880.0px;height:20px;line-height:20px;font-size:11px;color:#1f2328;white-space:nowrap;letter-spacing:0.208px;font-weight:bold;">TIMELINE</div>
<div class="abs" style="left:51px;top:36px;width:368px;height:79px;background:#f6f8fa;box-shadow:0 2px 3px -1px rgba(140,149,159,.35)"></div>
<div class="abs" style="left:71.3px;top:44.0px;height:20px;line-height:20px;font-size:11px;color:#1f2328;white-space:nowrap;letter-spacing:-0.526px;">EXPLORER</div>
<svg class="abs" style="left:389.0px;top:52.0px" width="14" height="4" viewBox="0 0 14 4" ><circle cx="2" cy="2" r="1.05" fill="#57606a"/><circle cx="7" cy="2" r="1.05" fill="#57606a"/><circle cx="12" cy="2" r="1.05" fill="#57606a"/></svg>
<svg class="abs" style="left:55.0px;top:78.0px" width="12" height="8" viewBox="0 0 12 8" ><path d="M1 1.5l5 5 5-5" fill="none" stroke="#57606a" stroke-width="1.1"/></svg>
<div class="abs" style="left:71.3px;top:72.0px;height:20px;line-height:20px;font-size:11px;color:#1f2328;white-space:nowrap;letter-spacing:0.069px;font-weight:bold;">DATASET_GENERATION</div>
<svg class="abs" style="left:317.0px;top:74.0px" width="16" height="16" viewBox="0 0 16 16" ><g fill="none" stroke="#57606a" stroke-width="1.150"><path d="M8.300 14.700H2.300V1.500H10L13.500 5V7.800M10 1.500V5H13.500M12.400 8.800V15.800M8.900 12.300H15.900"/></g></svg>
<svg class="abs" style="left:341.0px;top:74.0px" width="16" height="16" viewBox="0 0 16 16" ><g fill="none" stroke="#57606a" stroke-width="1.150"><path d="M7 12.700H1.300V1.500H6.500L8 2.500H15V7.500M1.300 5H6L8 2.500M6.500 5H15M12.400 8.800V15.800M8.900 12.300H15.900"/></g></svg>
<svg class="abs" style="left:365.0px;top:74.0px" width="16" height="16" viewBox="0 0 16 16" ><g fill="none" stroke="#57606a" stroke-width="1.100"><path d="M2 2.500H5.500V6M5.200 3.400A5.500 5.500 0 1 0 9.700 2.800"/></g></svg>
<svg class="abs" style="left:389.0px;top:74.0px" width="16" height="16" viewBox="0 0 16 16" ><g fill="none" stroke="#57606a" stroke-width="1.150"><rect x="2" y="5" width="9.200" height="8.900" rx="1.200"/><path d="M5.300 5V3.300a1.200 1.200 0 0 1 1.200-1.200H12.600a1.200 1.200 0 0 1 1.200 1.200V9.800a1.200 1.200 0 0 1-1.200 1.200H11.200M4 9.400H9"/></g></svg>
<svg class="abs" style="left:69.0px;top:100.0px" width="12" height="8" viewBox="0 0 12 8" ><path d="M1 1.5l5 5 5-5" fill="none" stroke="#57606a" stroke-width="1.1"/></svg>
<svg class="abs" style="left:85.8px;top:98.5px" width="15.5" height="11" viewBox="0 0 17 13" ><path d="M1.5 0.5h4.3l1.6 1.7h5.8a1.3 1.3 0 0 1 1.3 1.3v1H4.2a1.6 1.6 0 0 0-1.5 1.100L.3 11.6V1.8A1.3 1.3 0 0 1 1.5.5z" fill="#90a4ae"/><path d="M4.4 5.2h12.100l-2.4 6.600a1.2 1.2 0 0 1-1.100.8H.6l2.500-6.500a1.300 1.300 0 0 1 1.300-.9z" fill="#90a4ae"/></svg>
<div class="abs" style="left:107.3px;top:95.0px;height:20px;line-height:20px;font-size:13px;color:#0969da;white-space:nowrap;letter-spacing:0.308px;">dataset</div>
<div class="abs" style="left:394.200px;top:100.200px;width:7.400px;height:7.400px;border-radius:50%;background:#8ab6ee"></div>
<div class="abs" style="left:420px;top:36px;width:312px;height:35px;background:#f6f8fa"></div>
<div class="hl" style="left:420px;top:70px;width:312px;height:1px"></div>
<div class="abs" style="left:420px;top:36px;width:153px;height:35px;background:#fff"></div>
<div class="hl" style="left:573px;top:36px;width:1px;height:35px"></div>
<div class="abs" style="left:420px;top:71px;width:312px;height:22px;background:#fff"></div>
<svg class="abs" style="left:432.7px;top:47.5px" width="10.6" height="13.8" viewBox="0 0 16 20" ><path d="M2.2 0.3h7.6l5.9 5.9v11.6a1.9 1.9 0 0 1-1.9 1.9H2.2a1.9 1.9 0 0 1-1.9-1.9V2.2A1.9 1.9 0 0 1 2.2 0.3z" fill="#ff5252"/><path d="M9.3 1.6v5h5z" fill="#fff" opacity=".92"/><path d="M2.4 10h7.2v1.8H2.4zM5 14.4h8.8v1.8H5z" fill="#fff"/></svg>
<div class="abs" style="left:452.3px;top:44.0px;height:20px;line-height:20px;font-size:13px;color:#0969da;white-space:nowrap;letter-spacing:0.222px;">industry.yaml</div>
<div class="abs" style="left:537.0px;top:44.0px;height:20px;line-height:20px;font-size:11px;color:#0969da;white-space:nowrap;letter-spacing:0px;">U</div>
<svg class="abs" style="left:554.0px;top:49.0px" width="10" height="10" viewBox="0 0 10 10" ><path d="M0.8 0.8l8.4 8.4M9.2 0.8L0.8 9.2" fill="none" stroke="#8c959f" stroke-width="1.1"/></svg>
<svg class="abs" style="left:701.5px;top:52.0px" width="14" height="4" viewBox="0 0 14 4" ><circle cx="2" cy="2" r="1.05" fill="#57606a"/><circle cx="7" cy="2" r="1.05" fill="#57606a"/><circle cx="12" cy="2" r="1.05" fill="#57606a"/></svg>
<div class="abs" style="left:436.0px;top:72.5px;height:20px;line-height:20px;font-size:13px;color:#57606a;white-space:nowrap;letter-spacing:0.418px;">config</div>
<svg class="abs" style="left:478.6px;top:77.9px" width="6.8" height="10.2" viewBox="0 0 8 12" ><path d="M1.5 1l5 5-5 5" fill="none" stroke="#57606a" stroke-width="1.1"/></svg>
<svg class="abs" style="left:493.2px;top:76.0px" width="10.6" height="13.8" viewBox="0 0 16 20" ><path d="M2.2 0.3h7.6l5.9 5.9v11.6a1.9 1.9 0 0 1-1.9 1.9H2.2a1.9 1.9 0 0 1-1.9-1.9V2.2A1.9 1.9 0 0 1 2.2 0.3z" fill="#ff5252"/><path d="M9.3 1.6v5h5z" fill="#fff" opacity=".92"/><path d="M2.4 10h7.2v1.8H2.4zM5 14.4h8.8v1.8H5z" fill="#fff"/></svg>
<div class="abs" style="left:512.0px;top:72.5px;height:20px;line-height:20px;font-size:13px;color:#57606a;white-space:nowrap;letter-spacing:0.26px;">industry.yaml</div>
<div class="abs" style="left:420px;top:93px;width:312px;height:807px;background:#fff"></div>
<div class="abs" style="left:486px;top:579px;width:246px;height:18px;background:#f3f4f6"></div>
<div class="ln" style="left:420px;top:94px;width:40px">1
2
3
4
5
6
7
8
9
10
11
12
13
14
15
16
17
18
19
20
21
22
23
24
25
26
27
<b>28</b>
29
30
31
32
33
34
35
36
37
38
39
40
41
42
43
44
45</div>
<div class="code mono" style="left:486px;top:94px;width:246px;height:806px"><div><span class="k">datasetName</span><span class="p"> :</span> <span class="s">industrie</span></div><div><span class="k">numberOfRecords</span><span class="p"> :</span> <span class="k">1000</span></div><div><span class="k">fields</span><span class="p">:</span></div><div>  <span class="p">− </span><span class="k">fieldName</span><span class="p">:</span> <span class="s">code_insee_commune</span></div><div>    <span class="k">type</span><span class="p">:</span> <span class="s">id</span></div><div>    <span class="k">pattern</span><span class="p"> :</span> <span class="s">type</span></div><div>    <span class="k">pattern_max_cycle</span><span class="p"> :</span> <span class="k">6</span></div><div>    <span class="k">pattern_part_of_dataset</span><span class="p"> :</span> <span class="k">0.8</span></div><div>    <span class="k">rules</span><span class="p">:</span></div><div>      <span class="k">len</span><span class="p">:</span> <span class="k">5</span></div><div>      <span class="k">includeLetters</span><span class="p">:</span> <span class="k">false</span></div><div>      <span class="k">includeNumbers</span><span class="p">:</span> <span class="k">true</span></div><div>      <span class="k">includeSpecialChars</span><span class="p">:</span> <span class="k">false</span></div><div></div><div>  <span class="p">− </span><span class="k">fieldName</span><span class="p"> :</span> <span class="s">client_type</span></div><div>    <span class="k">type</span><span class="p"> :</span> <span class="s">string</span></div><div>    <span class="k">rules</span><span class="p">:</span></div><div>      <span class="k">allowedValues</span><span class="p"> :</span> <span class="p">[</span><span class="s">"client"</span><span class="p">,</span> <span class="s">"</span></div><div>  <span class="p">− </span><span class="k">fieldName</span><span class="p"> :</span> <span class="s">wieght_kg</span></div><div>    <span class="k">type</span><span class="p"> :</span> <span class="s">float</span></div><div>    <span class="k">rules</span><span class="p">:</span></div><div>      <span class="k">range</span><span class="p">:</span></div><div>        <span class="k">min</span><span class="p"> :</span> <span class="k">0</span></div><div>        <span class="k">max</span><span class="p"> :</span> <span class="k">100</span></div><div>  <span class="p">− </span><span class="k">fieldName</span><span class="p"> :</span> <span class="s">process_start</span></div><div>    <span class="k">type</span><span class="p"> :</span> <span class="s">date</span></div><div>    <span class="k">rules</span><span class="p">:</span></div><div>      <span class="k">range</span><span class="p">:</span></div><div>        <span class="k">start</span><span class="p"> :</span> <span class="s">"2022−01−01"</span></div><div>        <span class="k">end</span><span class="p"> :</span> <span class="s">"2030−01−01"</span></div><div>      <span class="k">series</span><span class="p"> :</span> <span class="s">hours</span></div><div>      <span class="k">series_gap</span><span class="p"> :</span> <span class="k">1</span></div><div>      <span class="k">format</span><span class="p"> :</span> <span class="s">timestamp</span></div><div>  <span class="p">− </span><span class="k">fieldName</span><span class="p"> :</span> <span class="s">cycle_time_min</span></div><div>    <span class="k">type</span><span class="p"> :</span> <span class="s">integer</span></div><div>    <span class="k">rules</span><span class="p">:</span></div><div>      <span class="k">range</span><span class="p">:</span></div><div>        <span class="k">min</span><span class="p"> :</span> <span class="k">0</span></div><div>        <span class="k">max</span><span class="p"> :</span> <span class="k">100</span></div><div>  <span class="p">− </span><span class="k">fieldName</span><span class="p"> :</span> <span class="s">water_consumption_</span></div><div>    <span class="k">type</span><span class="p"> :</span> <span class="s">float</span></div><div>    <span class="k">correaltion</span><span class="p"> :</span> <span class="k">0.8</span></div><div>    <span class="k">correlation_target</span><span class="p">:</span> <span class="s">wieght_kg</span></div><div>    <span class="k">rules</span><span class="p">:</span></div><div>      <span class="k">range</span><span class="p">:</span></div></div>
<div class="guide" style="left:486px;top:147px;height:756px"></div>
<div class="guide" style="left:500px;top:165px;height:162px"></div>
<div class="guide" style="left:500px;top:363px;height:54px"></div>
<div class="guide" style="left:500px;top:435px;height:90px"></div>
<div class="guide" style="left:500px;top:543px;height:144px"></div>
<div class="guide" style="left:500px;top:705px;height:90px"></div>
<div class="guide" style="left:500px;top:813px;height:90px"></div>
<div class="guide" style="left:515px;top:255px;height:72px"></div>
<div class="guide" style="left:515px;top:399px;height:18px"></div>
<div class="guide" style="left:515px;top:471px;height:54px"></div>
<div class="guide" style="left:515px;top:579px;height:108px"></div>
<div class="guide" style="left:515px;top:741px;height:54px"></div>
<div class="guide" style="left:515px;top:885px;height:18px"></div>
<div class="guide" style="left:529px;top:489px;height:36px"></div>
<div class="guide" style="left:529px;top:597px;height:36px"></div>
<div class="guide" style="left:529px;top:759px;height:36px"></div>
<div class="guide" style="left:529px;top:597px;height:36px;background:#b8bfc7"></div>
<div class="abs" style="left:719px;top:299px;width:13px;height:2px;background:#2f3337"></div>
<div class="hl" style="left:732px;top:36px;width:1px;height:864px"></div>
<div class="abs" style="left:733px;top:36px;width:369px;height:35px;background:#f6f8fa"></div>
<div class="hl" style="left:733px;top:70px;width:369px;height:1px"></div>
<div class="abs" style="left:733px;top:36px;width:164px;height:35px;background:#fff"></div>
<div class="abs" style="left:733px;top:36px;width:164px;height:1px;background:#fd8c73"></div>
<div class="hl" style="left:897px;top:36px;width:1px;height:35px"></div>
<div class="abs" style="left:733px;top:71px;width:369px;height:22px;background:#fff"></div>
<svg class="abs" style="left:743.0px;top:48.5px" width="14" height="11" viewBox="0 0 14 11" ><path d="M6 0.800H4.200a1.600 1.600 0 0 0-1.600 1.600V4c0 .9-.7 1.500-1.800 1.500 1.100 0 1.800.6 1.800 1.500v1.600a1.600 1.600 0 0 0 1.600 1.600H6M8 0.800h1.800a1.600 1.600 0 0 1 1.600 1.600V4c0 .9.7 1.500 1.800 1.500-1.100 0-1.800.6-1.800 1.500v1.600a1.600 1.600 0 0 1-1.600 1.600H8" fill="none" stroke="#f9a825" stroke-width="1.450" stroke-linejoin="round"/></svg>
<div class="abs" style="left:764.5px;top:44.0px;height:20px;line-height:20px;font-size:13px;color:#0969da;white-space:nowrap;letter-spacing:0.222px;">healthcare.json</div>
<div class="abs" style="left:861.0px;top:44.0px;height:20px;line-height:20px;font-size:11px;color:#0969da;white-space:nowrap;letter-spacing:0px;">U</div>
<svg class="abs" style="left:880.0px;top:49.0px" width="10" height="10" viewBox="0 0 10 10" ><path d="M0.8 0.8l8.4 8.4M9.2 0.8L0.8 9.2" fill="none" stroke="#24292f" stroke-width="1.1"/></svg>
<svg class="abs" style="left:993.0px;top:46.0px" width="16" height="16" viewBox="0 0 24 24" ><path fill="#24292f" d="M22.2819 9.8211a5.9847 5.9847 0 0 0-.5157-4.9108 6.0462 6.0462 0 0 0-6.5098-2.9A6.0651 6.0651 0 0 0 4.9807 4.1818a5.9847 5.9847 0 0 0-3.9977 2.9 6.0462 6.0462 0 0 0 .7427 7.0966 5.98 5.98 0 0 0 .511 4.9107 6.051 6.051 0 0 0 6.5146 2.9001A5.9847 5.9847 0 0 0 13.2599 24a6.0557 6.0557 0 0 0 5.7718-4.2058 5.9894 5.9894 0 0 0 3.9977-2.9001 6.0557 6.0557 0 0 0-.7475-7.0729zm-9.022 12.6081a4.4755 4.4755 0 0 1-2.8764-1.0408l.1419-.0804 4.7783-2.7582a.7948.7948 0 0 0 .3927-.6813v-6.7369l2.02 1.1686a.071.071 0 0 1 .038.052v5.5826a4.504 4.504 0 0 1-4.4945 4.4944zm-9.6607-4.1254a4.4708 4.4708 0 0 1-.5346-3.0137l.142.0852 4.783 2.7582a.7712.7712 0 0 0 .7806 0l5.8428-3.3685v2.3324a.0804.0804 0 0 1-.0332.0615L9.74 19.9502a4.4992 4.4992 0 0 1-6.1408-1.6464zM2.3408 7.8956a4.485 4.485 0 0 1 2.3655-1.9728V11.6a.7664.7664 0 0 0 .3879.6765l5.8144 3.3543-2.0201 1.1685a.0757.0757 0 0 1-.071 0l-4.8303-2.7865A4.504 4.504 0 0 1 2.3408 7.8956zm16.5963 3.8558L13.1038 8.364 15.1192 7.2a.0757.0757 0 0 1 .071 0l4.8303 2.7913a4.4944 4.4944 0 0 1-.6765 8.1042v-5.6772a.79.79 0 0 0-.407-.667zm2.0107-3.0231l-.142-.0852-4.7735-2.7818a.7759.7759 0 0 0-.7854 0L9.409 9.2297V6.8974a.0662.0662 0 0 1 .0284-.0615l4.8303-2.7866a4.4992 4.4992 0 0 1 6.6802 4.66zM8.3065 12.863l-2.02-1.1638a.0804.0804 0 0 1-.038-.0567V6.0742a4.4992 4.4992 0 0 1 7.3757-3.4537l-.142.0805L8.704 5.459a.7948.7948 0 0 0-.3927.6813zm1.0976-2.3654l2.602-1.4998 2.6069 1.4998v2.9994l-2.5974 1.4997-2.6067-1.4997Z"/></svg>
<svg class="abs" style="left:1019.0px;top:47.0px" width="16" height="16" viewBox="0 0 16 16" ><g fill="none" stroke="#57606a" stroke-width="1.150"><circle cx="3.400" cy="2.900" r="1.900"/><circle cx="12.600" cy="13" r="1.900"/><path d="M3.400 4.900V10.500a2.500 2.500 0 0 0 2.500 2.500H9M7.200 11l2 2-2 2M12.600 11V5.400a2.500 2.500 0 0 0-2.500-2.500H7M8.800 0.900l-2 2 2 2"/></g></svg>
<svg class="abs" style="left:1046.9px;top:46.9px" width="13.2" height="13.2" viewBox="0 0 14 14" ><g fill="none" stroke="#57606a" stroke-width="1.200"><rect x="0.900" y="0.900" width="12.200" height="12.200" rx="1.300"/><path d="M7 0.900v12.200"/></g></svg>
<svg class="abs" style="left:1072.0px;top:52.0px" width="14" height="4" viewBox="0 0 14 4" ><circle cx="2" cy="2" r="1.05" fill="#57606a"/><circle cx="7" cy="2" r="1.05" fill="#57606a"/><circle cx="12" cy="2" r="1.05" fill="#57606a"/></svg>
<div class="abs" style="left:748.2px;top:72.5px;height:20px;line-height:20px;font-size:13px;color:#57606a;white-space:nowrap;letter-spacing:0.308px;">dataset</div>
<svg class="abs" style="left:798.6px;top:77.9px" width="6.8" height="10.2" viewBox="0 0 8 12" ><path d="M1.5 1l5 5-5 5" fill="none" stroke="#57606a" stroke-width="1.1"/></svg>
<svg class="abs" style="left:810.0px;top:77.0px" width="14" height="11" viewBox="0 0 14 11" ><path d="M6 0.800H4.200a1.600 1.600 0 0 0-1.600 1.600V4c0 .9-.7 1.500-1.800 1.500 1.100 0 1.800.6 1.800 1.500v1.600a1.600 1.600 0 0 0 1.600 1.600H6M8 0.800h1.800a1.600 1.600 0 0 1 1.600 1.600V4c0 .9.7 1.500 1.800 1.500-1.100 0-1.800.6-1.800 1.500v1.600a1.600 1.600 0 0 1-1.600 1.600H8" fill="none" stroke="#f9a825" stroke-width="1.450" stroke-linejoin="round"/></svg>
<div class="abs" style="left:831.7px;top:72.5px;height:20px;line-height:20px;font-size:13px;color:#57606a;white-space:nowrap;letter-spacing:0.262px;">healthcare.json</div>
<svg class="abs" style="left:929.6px;top:77.9px" width="6.8" height="10.2" viewBox="0 0 8 12" ><path d="M1.5 1l5 5-5 5" fill="none" stroke="#57606a" stroke-width="1.1"/></svg>
<svg class="abs" style="left:941.0px;top:77.0px" width="12.5" height="11" viewBox="0 0 14 11" ><path d="M6 0.800H4.200a1.600 1.600 0 0 0-1.600 1.600V4c0 .9-.7 1.500-1.800 1.500 1.100 0 1.800.6 1.800 1.500v1.600a1.600 1.600 0 0 0 1.600 1.600H6M8 0.800h1.800a1.600 1.600 0 0 1 1.600 1.600V4c0 .9.7 1.500 1.800 1.500-1.100 0-1.800.6-1.800 1.500v1.600a1.600 1.600 0 0 1-1.600 1.600H8" fill="none" stroke="#9a5b13" stroke-width="1.450" stroke-linejoin="round"/></svg>
<div class="abs" style="left:959.6px;top:72.5px;height:20px;line-height:20px;font-size:13px;color:#57606a;white-space:nowrap;letter-spacing:0.07px;">24</div>
<svg class="abs" style="left:979.6px;top:77.9px" width="6.8" height="10.2" viewBox="0 0 8 12" ><path d="M1.5 1l5 5-5 5" fill="none" stroke="#57606a" stroke-width="1.1"/></svg>
<svg class="abs" style="left:991.5px;top:77.0px" width="15" height="11" viewBox="0 0 15 11" ><rect x="0.600" y="0.600" width="13.800" height="9.800" rx="1" fill="none" stroke="#0a3069" stroke-width="1.100"/><text x="7.500" y="7.800" font-size="5.500" font-family="Liberation Sans" font-weight="bold" text-anchor="middle" fill="#0a3069">abc</text></svg>
<div class="abs" style="left:1010.6px;top:72.5px;height:20px;line-height:20px;font-size:13px;color:#57606a;white-space:nowrap;letter-spacing:0.094px;">exam_id</div>
<div class="abs" style="left:733px;top:93px;width:369px;height:807px;background:#fff"></div>
<div class="abs" style="left:812px;top:543px;width:290px;height:18px;background:#f3f4f6"></div>
<div class="ln" style="left:746px;top:94px;width:40px">1
2
3
4
5
6
7
8
9
10
11
12
13
14
15
16
17
18
19
20
21
22
23
24
25
<b>26</b>
27
28
29
30
31
32
33
34
35
36
37
38
39
40
41
42
43
44
45</div>
<div class="code mono" style="left:812px;top:94px;width:290px;height:806px"><div><span class="b">[</span></div><div><span class="b">{</span><span class="k">"exam_id"</span><span class="p">:</span> <span class="s">"VZfgCxonRyZik"</span><span class="p">,</span> <span class="k">"patient_id</span></div><div><span class="b">{</span><span class="k">"exam_id"</span><span class="p">:</span> <span class="s">"SXazEnaGXzzKt"</span><span class="p">,</span> <span class="k">"patient_id</span></div><div><span class="b">{</span><span class="k">"exam_id"</span><span class="p">:</span> <span class="s">"OXRFYGP93yTP3"</span><span class="p">,</span> <span class="k">"patient_id</span></div><div><span class="b">{</span><span class="k">"exam_id"</span><span class="p">:</span> <span class="s">"tuBSbbc6z4aTE"</span><span class="p">,</span> <span class="k">"patient_id</span></div><div><span class="b">{</span><span class="k">"exam_id"</span><span class="p">:</span> <span class="s">"nDKpaqmMblUSK"</span><span class="p">,</span> <span class="k">"patient_id</span></div><div><span class="b">{</span><span class="k">"exam_id"</span><span class="p">:</span> <span class="s">"G0gU7xn5FWBQn"</span><span class="p">,</span> <span class="k">"patient_id</span></div><div><span class="b">{</span><span class="k">"exam_id"</span><span class="p">:</span> <span class="s">"Ar5tDGMqKhTwb"</span><span class="p">,</span> <span class="k">"patient_id</span></div><div><span class="b">{</span><span class="k">"exam_id"</span><span class="p">:</span> <span class="s">"AoVaKqfALEvGf"</span><span class="p">,</span> <span class="k">"patient_id</span></div><div><span class="b">{</span><span class="k">"exam_id"</span><span class="p">:</span> <span class="s">"qNBPOgWHpKEFk"</span><span class="p">,</span> <span class="k">"patient_id</span></div><div><span class="b">{</span><span class="k">"exam_id"</span><span class="p">:</span> <span class="s">"ZObQ5ieEtKRGM"</span><span class="p">,</span> <span class="k">"patient_id</span></div><div><span class="b">{</span><span class="k">"exam_id"</span><span class="p">:</span> <span class="s">"HPeEWMf940f1Z"</span><span class="p">,</span> <span class="k">"patient_id</span></div><div><span class="b">{</span><span class="k">"exam_id"</span><span class="p">:</span> <span class="s">"ROv415APTBs3R"</span><span class="p">,</span> <span class="k">"patient_id</span></div><div><span class="b">{</span><span class="k">"exam_id"</span><span class="p">:</span> <span class="s">"bBVianvzcH5Ym"</span><span class="p">,</span> <span class="k">"patient_id</span></div><div><span class="b">{</span><span class="k">"exam_id"</span><span class="p">:</span> <span class="s">"hbknuUTz7N2nU"</span><span class="p">,</span> <span class="k">"patient_id</span></div><div><span class="b">{</span><span class="k">"exam_id"</span><span class="p">:</span> <span class="s">"ja2L2F4hA54at"</span><span class="p">,</span> <span class="k">"patient_id</span></div><div><span class="b">{</span><span class="k">"exam_id"</span><span class="p">:</span> <span class="s">"6uVuPcmVg0uLk"</span><span class="p">,</span> <span class="k">"patient_id</span></div><div><span class="b">{</span><span class="k">"exam_id"</span><span class="p">:</span> <span class="s">"4Ug2v4P2MDGcx"</span><span class="p">,</span> <span class="k">"patient_id</span></div><div><span class="b">{</span><span class="k">"exam_id"</span><span class="p">:</span> <span class="s">"W6mGSEWlcCX2b"</span><span class="p">,</span> <span class="k">"patient_id</span></div><div><span class="b">{</span><span class="k">"exam_id"</span><span class="p">:</span> <span class="s">"ZY7qmvYKmWcl4"</span><span class="p">,</span> <span class="k">"patient_id</span></div><div><span class="b">{</span><span class="k">"exam_id"</span><span class="p">:</span> <span class="s">"sVEjSse375mZi"</span><span class="p">,</span> <span class="k">"patient_id</span></div><div><span class="b">{</span><span class="k">"exam_id"</span><span class="p">:</span> <span class="s">"0Xc6sCF8aXkId"</span><span class="p">,</span> <span class="k">"patient_id</span></div><div><span class="b">{</span><span class="k">"exam_id"</span><span class="p">:</span> <span class="s">"M3H9ckG858CKi"</span><span class="p">,</span> <span class="k">"patient_id</span></div><div><span class="b">{</span><span class="k">"exam_id"</span><span class="p">:</span> <span class="s">"zefmxRqHc0GQw"</span><span class="p">,</span> <span class="k">"patient_id</span></div><div><span class="b">{</span><span class="k">"exam_id"</span><span class="p">:</span> <span class="s">"F1qRvxe2v6Y3w"</span><span class="p">,</span> <span class="k">"patient_id</span></div><div><span class="b">{</span><span class="k">"exam_id"</span><span class="p">:</span> <span class="s">"FylGf9lERjSlK"</span><span class="p">,</span> <span class="k">"patient_id</span></div><div><span class="b">{</span><span class="k">"exam_id"</span><span class="p">:</span> <span class="s">"i4ZLVup3ynyIV"</span><span class="p">,</span> <span class="k">"patient_id</span></div><div><span class="b">{</span><span class="k">"exam_id"</span><span class="p">:</span> <span class="s">"TiqJH1NfvLnwI"</span><span class="p">,</span> <span class="k">"patient_id</span></div><div><span class="b">{</span><span class="k">"exam_id"</span><span class="p">:</span> <span class="s">"hcmW9yNncUd9p"</span><span class="p">,</span> <span class="k">"patient_id</span></div><div><span class="b">{</span><span class="k">"exam_id"</span><span class="p">:</span> <span class="s">"c3f8RCx1ujf7i"</span><span class="p">,</span> <span class="k">"patient_id</span></div><div><span class="b">{</span><span class="k">"exam_id"</span><span class="p">:</span> <span class="s">"YvBoVWS02qq25"</span><span class="p">,</span> <span class="k">"patient_id</span></div><div><span class="b">{</span><span class="k">"exam_id"</span><span class="p">:</span> <span class="s">"ETG0e5Go0L51E"</span><span class="p">,</span> <span class="k">"patient_id</span></div><div><span class="b">{</span><span class="k">"exam_id"</span><span class="p">:</span> <span class="s">"ARNr9Do9MXJCw"</span><span class="p">,</span> <span class="k">"patient_id</span></div><div><span class="b">{</span><span class="k">"exam_id"</span><span class="p">:</span> <span class="s">"Lcxo5XoVjQffC"</span><span class="p">,</span> <span class="k">"patient_id</span></div><div><span class="b">{</span><span class="k">"exam_id"</span><span class="p">:</span> <span class="s">"v2bNfspxcLAbN"</span><span class="p">,</span> <span class="k">"patient_id</span></div><div><span class="b">{</span><span class="k">"exam_id"</span><span class="p">:</span> <span class="s">"5goSzqDCfg946"</span><span class="p">,</span> <span class="k">"patient_id</span></div><div><span class="b">{</span><span class="k">"exam_id"</span><span class="p">:</span> <span class="s">"6f4EuzlOESsWg"</span><span class="p">,</span> <span class="k">"patient_id</span></div><div><span class="b">{</span><span class="k">"exam_id"</span><span class="p">:</span> <span class="s">"1JSbYhFg46mdM"</span><span class="p">,</span> <span class="k">"patient_id</span></div><div><span class="b">{</span><span class="k">"exam_id"</span><span class="p">:</span> <span class="s">"U1l1dR4XvXtcY"</span><span class="p">,</span> <span class="k">"patient_id</span></div><div><span class="b">{</span><span class="k">"exam_id"</span><span class="p">:</span> <span class="s">"EFoP0T0L2RciL"</span><span class="p">,</span> <span class="k">"patient_id</span></div><div><span class="b">{</span><span class="k">"exam_id"</span><span class="p">:</span> <span class="s">"r9AnD0NdEhlMZ"</span><span class="p">,</span> <span class="k">"patient_id</span></div><div><span class="b">{</span><span class="k">"exam_id"</span><span class="p">:</span> <span class="s">"KS7ineVUkvFyl"</span><span class="p">,</span> <span class="k">"patient_id</span></div><div><span class="b">{</span><span class="k">"exam_id"</span><span class="p">:</span> <span class="s">"Hh2Mf3oko9wQM"</span><span class="p">,</span> <span class="k">"patient_id</span></div><div><span class="b">{</span><span class="k">"exam_id"</span><span class="p">:</span> <span class="s">"8Nw1c0Ll5LzpZ"</span><span class="p">,</span> <span class="k">"patient_id</span></div><div><span class="b">{</span><span class="k">"exam_id"</span><span class="p">:</span> <span class="s">"qXx8qmCzk7q8X"</span><span class="p">,</span> <span class="k">"patient_id</span></div></div>
<div class="abs" style="left:906px;top:543px;width:94px;height:18px;border:1px solid #d8dee4;background:rgba(234,238,242,.5)"></div>
<div class="abs" style="left:812px;top:886px;width:21px;height:14px;background:rgba(175,184,193,.4)"></div>
<div class="abs" style="left:1088px;top:93px;width:13px;height:20px;background:#e6e8eb"></div>
<div class="abs" style="left:1088px;top:94px;width:13px;height:2px;background:#4a86e0"></div>
<div class="abs" style="left:1092px;top:95px;width:5px;height:4px;background:#8c959f"></div>
<div class="abs" style="left:910px;top:897px;width:191px;height:3px;background:rgba(140,149,159,.22)"></div>
<div class="hl" style="left:1102px;top:36px;width:1px;height:864px"></div>
<div class="abs" style="left:1103px;top:36px;width:254px;height:35px;background:#f6f8fa"></div>
<div class="hl" style="left:1103px;top:70px;width:254px;height:1px"></div>
<div class="hl" style="left:1124px;top:36px;width:1px;height:35px"></div>
<div class="abs" style="left:1125px;top:36px;width:158px;height:35px;background:#fff"></div>
<div class="hl" style="left:1283px;top:36px;width:1px;height:35px"></div>
<div class="abs" style="left:1103px;top:71px;width:254px;height:22px;background:#fff"></div>
<svg class="abs" style="left:1137.7px;top:47.5px" width="10.6" height="13.8" viewBox="0 0 16 20" ><path d="M2.2 0.3h7.6l5.9 5.9v11.6a1.9 1.9 0 0 1-1.9 1.9H2.2a1.9 1.9 0 0 1-1.9-1.9V2.2A1.9 1.9 0 0 1 2.2 0.3z" fill="#8bc34a"/><path d="M9.3 1.6v5h5z" fill="#fff" opacity=".92"/><path d="M3 9.2l2.6 0 2.4 2.4 2.4-2.4 2.6 0-3.7 3.7 3.7 3.7-2.6 0-2.4-2.4-2.4 2.4-2.6 0 3.7-3.7z" fill="#fff"/><rect x="6.9" y="11.7" width="2.2" height="2.2" fill="#8bc34a"/></svg>
<div class="abs" style="left:1157.9px;top:44.0px;height:20px;line-height:20px;font-size:13px;color:#0969da;white-space:nowrap;letter-spacing:0.333px;font-style:italic;">logistique.csv</div>
<div class="abs" style="left:1247.0px;top:44.0px;height:20px;line-height:20px;font-size:11px;color:#0969da;white-space:nowrap;letter-spacing:0px;">U</div>
<svg class="abs" style="left:1264.0px;top:49.0px" width="10" height="10" viewBox="0 0 10 10" ><path d="M0.8 0.8l8.4 8.4M9.2 0.8L0.8 9.2" fill="none" stroke="#8c959f" stroke-width="1.1"/></svg>
<svg class="abs" style="left:1294.0px;top:46.7px" width="16" height="16" viewBox="0 0 16 16" ><path d="M7.900.5C5.200.5 4.400 1.600 4.400 2.800v1.700h3.700v.7H2.700C1.300 5.200.4 6.400.4 8.200s.9 3 2.300 3h1.300V9.300c0-1.300 1.100-2.300 2.400-2.300h3.500c1.100 0 1.900-.9 1.900-2V2.800c0-1.300-1.300-2.300-3.900-2.300zM6 1.700a.75.75 0 1 1 0 1.500.75.75 0 0 1 0-1.500z" fill="#3d8fd1"/><path d="M8.100 15.500c2.700 0 3.500-1.100 3.500-2.300v-1.700H7.900v-.7h5.400c1.400 0 2.300-1.200 2.300-3s-.9-3-2.300-3H12v1.900c0 1.300-1.100 2.300-2.400 2.300H6.100c-1.100 0-1.900.9-1.900 2v2.200c0 1.300 1.300 2.300 3.900 2.300zM10 14.300a.75.75 0 1 1 0-1.500.75.75 0 0 1 0 1.500z" fill="#ffd43b"/></svg>
<svg class="abs" style="left:1325.0px;top:52.0px" width="14" height="4" viewBox="0 0 14 4" ><circle cx="2" cy="2" r="1.05" fill="#57606a"/><circle cx="7" cy="2" r="1.05" fill="#57606a"/><circle cx="12" cy="2" r="1.05" fill="#57606a"/></svg>
<div class="abs" style="left:1316px;top:57px;width:1px;height:3px;background:#c8ced4"></div>
<div class="abs" style="left:1118.5px;top:72.5px;height:20px;line-height:20px;font-size:13px;color:#57606a;white-space:nowrap;letter-spacing:0.236px;">dataset</div>
<svg class="abs" style="left:1167.6px;top:77.9px" width="6.8" height="10.2" viewBox="0 0 8 12" ><path d="M1.5 1l5 5-5 5" fill="none" stroke="#57606a" stroke-width="1.1"/></svg>
<svg class="abs" style="left:1181.7px;top:76.0px" width="10.6" height="13.8" viewBox="0 0 16 20" ><path d="M2.2 0.3h7.6l5.9 5.9v11.6a1.9 1.9 0 0 1-1.9 1.9H2.2a1.9 1.9 0 0 1-1.9-1.9V2.2A1.9 1.9 0 0 1 2.2 0.3z" fill="#8bc34a"/><path d="M9.3 1.6v5h5z" fill="#fff" opacity=".92"/><path d="M3 9.2l2.6 0 2.4 2.4 2.4-2.4 2.6 0-3.7 3.7 3.7 3.7-2.6 0-2.4-2.4-2.4 2.4-2.6 0 3.7-3.7z" fill="#fff"/><rect x="6.9" y="11.7" width="2.2" height="2.2" fill="#8bc34a"/></svg>
<div class="abs" style="left:1201.8px;top:72.5px;height:20px;line-height:20px;font-size:13px;color:#57606a;white-space:nowrap;letter-spacing:0.333px;">logistique.csv</div>
<svg class="abs" style="left:1289.6px;top:77.9px" width="6.8" height="10.2" viewBox="0 0 8 12" ><path d="M1.5 1l5 5-5 5" fill="none" stroke="#57606a" stroke-width="1.1"/></svg>
<svg class="abs" style="left:1303.0px;top:76.0px" width="11" height="14" viewBox="0 0 11 14" ><path d="M1.6 0.6h5.6l3.2 3.2v9a.8.8 0 0 1-.8.8h-8a.8.8 0 0 1-.8-.8V1.4a.8.8 0 0 1 .8-.8zM7 0.8v3.2h3.2" fill="none" stroke="#8f5a0a" stroke-width="1.1"/></svg>
<div class="abs" style="left:1320.3px;top:72.5px;height:20px;line-height:20px;font-size:13px;color:#57606a;white-space:nowrap;letter-spacing:0.074px;">data</div>
<div class="abs" style="left:1103px;top:93px;width:254px;height:807px;background:#fff"></div>
<div class="abs" style="left:1175px;top:93px;width:182px;height:18px;background:#f3f4f6"></div>
<div class="ln" style="left:1109px;top:94px;width:40px"><b>1</b>
2
3
4
5
6
7
8
9
10
11
12
13
14
15
16
17
18
19
20
21
22
23
24
25
26
27
28
29
30
31
32
33
34
35
36
37
38
39
40
41
42
43
44
45</div>
<div class="code mono" style="left:1175px;top:94px;width:182px;height:806px"><div><span class="p">order_id,</span><span class="o">shipment_id,</span><span class="v">crea</span></div><div><span class="p">47028,</span><span class="o">42831,</span><span class="v">2022−01−01,</span><span class="g">El</span></div><div><span class="p">68821,</span><span class="o">14930,</span><span class="v">2022−01−01,</span><span class="g">Ea</span></div><div><span class="p">77782,</span><span class="o">84186,</span><span class="v">2022−01−01,</span><span class="g">Le</span></div><div><span class="p">06679,</span><span class="o">37814,</span><span class="v">2022−01−01,</span><span class="g">Lo</span></div><div><span class="p">69876,</span><span class="o">34266,</span><span class="v">2022−01−01,</span><span class="g">Je</span></div><div><span class="p">09605,</span><span class="o">54450,</span><span class="v">2022−01−01,</span><span class="g">An</span></div><div><span class="p">47009,</span><span class="o">15340,</span><span class="v">2022−01−01,</span><span class="g">No</span></div><div><span class="p">21302,</span><span class="o">08954,</span><span class="v">2022−01−01,</span><span class="g">Ti</span></div><div><span class="p">21585,</span><span class="o">85395,</span><span class="v">2022−01−01,</span><span class="g">Ma</span></div><div><span class="p">76867,</span><span class="o">61794,</span><span class="v">2022−01−01,</span><span class="g">Em</span></div><div><span class="p">74529,</span><span class="o">31502,</span><span class="v">2022−01−01,</span><span class="g">Su</span></div><div><span class="p">07425,</span><span class="o">57141,</span><span class="v">2022−01−01,</span><span class="g">So</span></div><div><span class="p">68830,</span><span class="o">83712,</span><span class="v">2022−01−01,</span><span class="g">To</span></div><div><span class="p">15306,</span><span class="o">48666,</span><span class="v">2022−01−01,</span><span class="g">An</span></div><div><span class="p">67740,</span><span class="o">55851,</span><span class="v">2022−01−01,</span><span class="g">Br</span></div><div><span class="p">75576,</span><span class="o">03582,</span><span class="v">2022−01−01,</span><span class="g">We</span></div><div><span class="p">01017,</span><span class="o">09030,</span><span class="v">2022−01−01,</span><span class="g">Ju</span></div><div><span class="p">08344,</span><span class="o">19044,</span><span class="v">2022−01−01,</span><span class="g">We</span></div><div><span class="p">27821,</span><span class="o">87120,</span><span class="v">2022−01−01,</span><span class="g">No</span></div><div><span class="p">61803,</span><span class="o">29585,</span><span class="v">2022−01−01,</span><span class="g">Po</span></div><div><span class="p">77568,</span><span class="o">49632,</span><span class="v">2022−01−01,</span><span class="g">We</span></div><div><span class="p">92671,</span><span class="o">41264,</span><span class="v">2022−01−02,</span><span class="g">El</span></div><div><span class="p">52588,</span><span class="o">99178,</span><span class="v">2022−01−02,</span><span class="g">La</span></div><div><span class="p">98096,</span><span class="o">66498,</span><span class="v">2022−01−02,</span><span class="g">St</span></div><div><span class="p">30272,</span><span class="o">36743,</span><span class="v">2022−01−02,</span><span class="g">Ea</span></div><div><span class="p">15245,</span><span class="o">55824,</span><span class="v">2022−01−02,</span><span class="g">No</span></div><div><span class="p">84287,</span><span class="o">76227,</span><span class="v">2022−01−02,</span><span class="g">Pa</span></div><div><span class="p">29141,</span><span class="o">05268,</span><span class="v">2022−01−02,</span><span class="g">We</span></div><div><span class="p">29131,</span><span class="o">81368,</span><span class="v">2022−01−02,</span><span class="g">Re</span></div><div><span class="p">48333,</span><span class="o">22119,</span><span class="v">2022−01−02,</span><span class="g">Je</span></div><div><span class="p">59876,</span><span class="o">76158,</span><span class="v">2022−01−02,</span><span class="g">Li</span></div><div><span class="p">81849,</span><span class="o">29819,</span><span class="v">2022−01−02,</span><span class="g">We</span></div><div><span class="p">44835,</span><span class="o">21718,</span><span class="v">2022−01−02,</span><span class="g">El</span></div><div><span class="p">21702,</span><span class="o">30074,</span><span class="v">2022−01−02,</span><span class="g">La</span></div><div><span class="p">19335,</span><span class="o">16942,</span><span class="v">2022−01−02,</span><span class="g">Po</span></div><div><span class="p">15819,</span><span class="o">83022,</span><span class="v">2022−01−02,</span><span class="g">Jo</span></div><div><span class="p">97254,</span><span class="o">09909,</span><span class="v">2022−01−02,</span><span class="g">Sy</span></div><div><span class="p">10822,</span><span class="o">08831,</span><span class="v">2022−01−02,</span><span class="g">So</span></div><div><span class="p">59298,</span><span class="o">66462,</span><span class="v">2022−01−02,</span><span class="g">So</span></div><div><span class="p">04202,</span><span class="o">48675,</span><span class="v">2022−01−02,</span><span class="g">Ro</span></div><div><span class="p">55058,</span><span class="o">53592,</span><span class="v">2022−01−02,</span><span class="g">Ro</span></div><div><span class="p">21869,</span><span class="o">92595,</span><span class="v">2022−01−02,</span><span class="g">Po</span></div><div><span class="p">94925,</span><span class="o">93623,</span><span class="v">2022−01−02,</span><span class="g">Po</span></div><div><span class="p">97372,</span><span class="o">54974,</span><span class="v">2022−01−02,</span><span class="g">Je</span></div></div>
<div class="abs" style="left:1343px;top:93px;width:12px;height:2px;background:#6ea8f7"></div>
<div class="abs" style="left:0;top:900px;width:1357px;height:25px;background:#fff"></div>
<div class="hl" style="left:0;top:900px;width:1357px;height:1px"></div>
<div class="abs" style="left:0;top:901px;width:37px;height:24px;background:#eaeef2"></div>
<svg class="abs" style="left:13.3px;top:903.5px" width="14" height="15" viewBox="0 0 14 15" ><g fill="none" stroke="#57606a" stroke-width="1.100" stroke-linecap="round" stroke-linejoin="round"><path d="M2.300 7.800l3.200 2.800-3.200 2.800M11.200 2.200L8 5l3.200 2.800"/></g></svg>
<svg class="abs" style="left:44.7px;top:904.0px" width="14" height="14" viewBox="0 0 14 14" ><g fill="none" stroke="#57606a" stroke-width="1.100" stroke-linecap="round" stroke-linejoin="round"><circle cx="4.100" cy="1.900" r="1.650"/><circle cx="4.100" cy="11.300" r="1.650"/><circle cx="10.600" cy="4.800" r="1.650"/><path d="M4.100 3.600V9.600M10.600 6.500c0 2.400-2.500 3-6.500 3.300"/></g></svg>
<div class="sb" style="left:62.7px;letter-spacing:0.224px">main*</div>
<svg class="abs" style="left:101.0px;top:904.0px" width="14" height="14" viewBox="0 0 14 14" ><g fill="none" stroke="#57606a" stroke-width="1.100" stroke-linecap="round" stroke-linejoin="round"><path d="M2.200 6.400A4.900 4.900 0 0 1 11.300 4.700M11.800 7.600A4.900 4.900 0 0 1 2.700 9.300M11.700 2.200V5.100H8.800M2.300 11.800V8.900H5.200"/></g></svg>
<svg class="abs" style="left:130.0px;top:904.0px" width="14" height="14" viewBox="0 0 14 14" ><g fill="none" stroke="#57606a" stroke-width="1.100" stroke-linecap="round" stroke-linejoin="round"><path d="M6.700 0.700V13.700M3.800 4.600V9.500M11.200 8.200c0 2.200-2 3.300-4.500 4.300"/><circle cx="3.800" cy="3" r="1.550"/><circle cx="3.800" cy="11.100" r="1.550"/><circle cx="11.200" cy="6.600" r="1.550"/></g></svg>
<svg class="abs" style="left:161.0px;top:904.0px" width="14" height="14" viewBox="0 0 14 14" ><g fill="none" stroke="#57606a" stroke-width="1.100" stroke-linecap="round" stroke-linejoin="round"><path d="M12.500 1.500c-3.500 0-6 2-7.500 5l2.500 2.500c3-1.500 5-4 5-7.500zM5 6.500H2.500L1 8.500l2.500.5M7.500 9v2.500l-2 1.500-.5-2.500M2 12l1.500-1.500"/></g></svg>
<svg class="abs" style="left:175.0px;top:904.0px" width="14" height="14" viewBox="0 0 14 14" ><g fill="none" stroke="#57606a" stroke-width="1.100" stroke-linecap="round" stroke-linejoin="round"><path d="M1 13L4.300 9.700M9.700 4.300L11 3"/><rect x="3.800" y="5.200" width="6.400" height="3.600" rx="1.800" transform="rotate(-45 7 7)"/><rect x="10" y="1.300" width="3.600" height="2.200" rx=".6" transform="rotate(-45 11.800 2.400)"/></g></svg>
<div class="sb" style="left:193.0px;letter-spacing:0.223px">Launchpad</div>
<svg class="abs" style="left:271.0px;top:904.0px" width="14" height="14" viewBox="0 0 14 14" ><g fill="none" stroke="#57606a" stroke-width="1.100" stroke-linecap="round" stroke-linejoin="round"><circle cx="7" cy="7" r="5.800"/><path d="M4.800 4.800l4.400 4.400M9.200 4.800L4.800 9.200"/></g></svg>
<div class="sb" style="left:288.5px;letter-spacing:0.026px">0</div>
<svg class="abs" style="left:299.0px;top:904.0px" width="14" height="14" viewBox="0 0 14 14" ><g fill="none" stroke="#57606a" stroke-width="1.100" stroke-linecap="round" stroke-linejoin="round"><path d="M7 1.500L13 12.500H1zM7 5.500v3.500M7 10.500v.5"/></g></svg>
<div class="sb" style="left:317.6px;letter-spacing:0.176px">16</div>
<svg class="abs" style="left:347.0px;top:904.0px" width="14" height="14" viewBox="0 0 14 14" ><g fill="none" stroke="#57606a" stroke-width="1.100" stroke-linecap="round" stroke-linejoin="round"><path d="M5.400 7V2L13.600 7.200 8.300 10.400" stroke-width="1"/><ellipse cx="4.200" cy="10.600" rx="1.900" ry="2.400" stroke-width="1"/><path d="M2.800 8.700L1.800 7.700M5.600 8.700l1-1M2.300 10.600H.8M6.100 10.600h1.500M2.700 12.500l-1 1M5.700 12.500l1 1" stroke-width=".9"/></g></svg>
<div class="sb" style="left:365.8px;letter-spacing:0.289px">Python Debugger: Python File (Dataset_Generation)</div>
<svg class="abs" style="left:675.5px;top:904.0px" width="14" height="14" viewBox="0 0 14 14" ><g fill="none" stroke="#57606a" stroke-width="1.100" stroke-linecap="round" stroke-linejoin="round"><path d="M0.900 9.300C1.500 5.800 4.500 4 8.600 3.800V1.400L13.200 4.900 8.600 8.500V6.300C5.500 6.400 3 7.400 0.900 9.300z"/><circle cx="5.900" cy="11.100" r="1.800" fill="#fff"/></g></svg>
<div class="sb" style="left:693.3px;letter-spacing:0.033px">Live Share</div>
<div class="sb" style="left:768.2px;letter-spacing:0.098px">Git Graph</div>
<svg class="abs" style="left:855.0px;top:904.0px" width="14" height="14" viewBox="0 0 14 14" ><g fill="none" stroke="#57606a" stroke-width="1.100" stroke-linecap="round" stroke-linejoin="round"><path d="M4.500 2.500H4a1.200 1.200 0 0 0-1.200 1.200V5.600c0 .8-.5 1.300-1.300 1.300.8 0 1.300.5 1.300 1.300V10.100a1.200 1.200 0 0 0 1.200 1.200H4.500M7.400 2.500H7.900a1.200 1.200 0 0 1 1.200 1.200V5.600c0 .8.5 1.300 1.300 1.300"/><circle cx="9.800" cy="10.700" r="2.100" stroke-width=".9"/><path d="M9 9.900l1.600 1.600M10.600 9.900L9 11.500" stroke-width=".8"/></g></svg>
<div class="sb" style="left:875.0px;letter-spacing:0.063px">Json</div>
<div class="abs" style="left:909px;top:901px;width:194px;height:21px;background:#eaeef2"></div>
<svg class="abs" style="left:919.0px;top:904.0px" width="14" height="14" viewBox="0 0 14 14" ><g fill="none" stroke="#57606a" stroke-width="1.100" stroke-linecap="round" stroke-linejoin="round"><circle cx="5.300" cy="4.300" r="2.200"/><circle cx="10" cy="4.300" r="2.200"/><path d="M3.200 5.500C1.500 6.500 1.300 8 1.300 9.500c0 1.500 2 3 4.700 3.300M7.600 4.300h.2"/><circle cx="10" cy="10.200" r="3.300" fill="#57606a" stroke="none"/><path d="M10 8.300v2.300M10 11.700v.4" stroke="#eaeef2" stroke-width="1.100"/></g></svg>
<div class="sb" style="left:937.0px;letter-spacing:0.346px">Completions quota reached</div>
<div class="sb" style="left:1111.0px;letter-spacing:0.196px">Supermaven Free Tier</div>
<svg class="abs" style="left:1250.5px;top:904.0px" width="14" height="14" viewBox="0 0 14 14" ><g fill="none" stroke="#57606a" stroke-width="1.100" stroke-linecap="round" stroke-linejoin="round"><path d="M1.500 7.500l3.500 3.500 7.500-8"/></g></svg>
<div class="sb" style="left:1268.3px;letter-spacing:0.34px">Prettier</div>
<svg class="abs" style="left:1327.0px;top:904.0px" width="14" height="14" viewBox="0 0 14 14" ><g fill="none" stroke="#57606a" stroke-width="1.100" stroke-linecap="round" stroke-linejoin="round"><path d="M3 10.500V6.500a4 4 0 0 1 7-2.600M11 7v3.500l1.200 1.500H1.800L3 10.500M5.800 12.500a1.300 1.300 0 0 0 2.400 0"/><circle cx="11" cy="3.500" r="1.800" fill="#57606a"/></g></svg>
</div><div id="topedge"></div></body></html>
